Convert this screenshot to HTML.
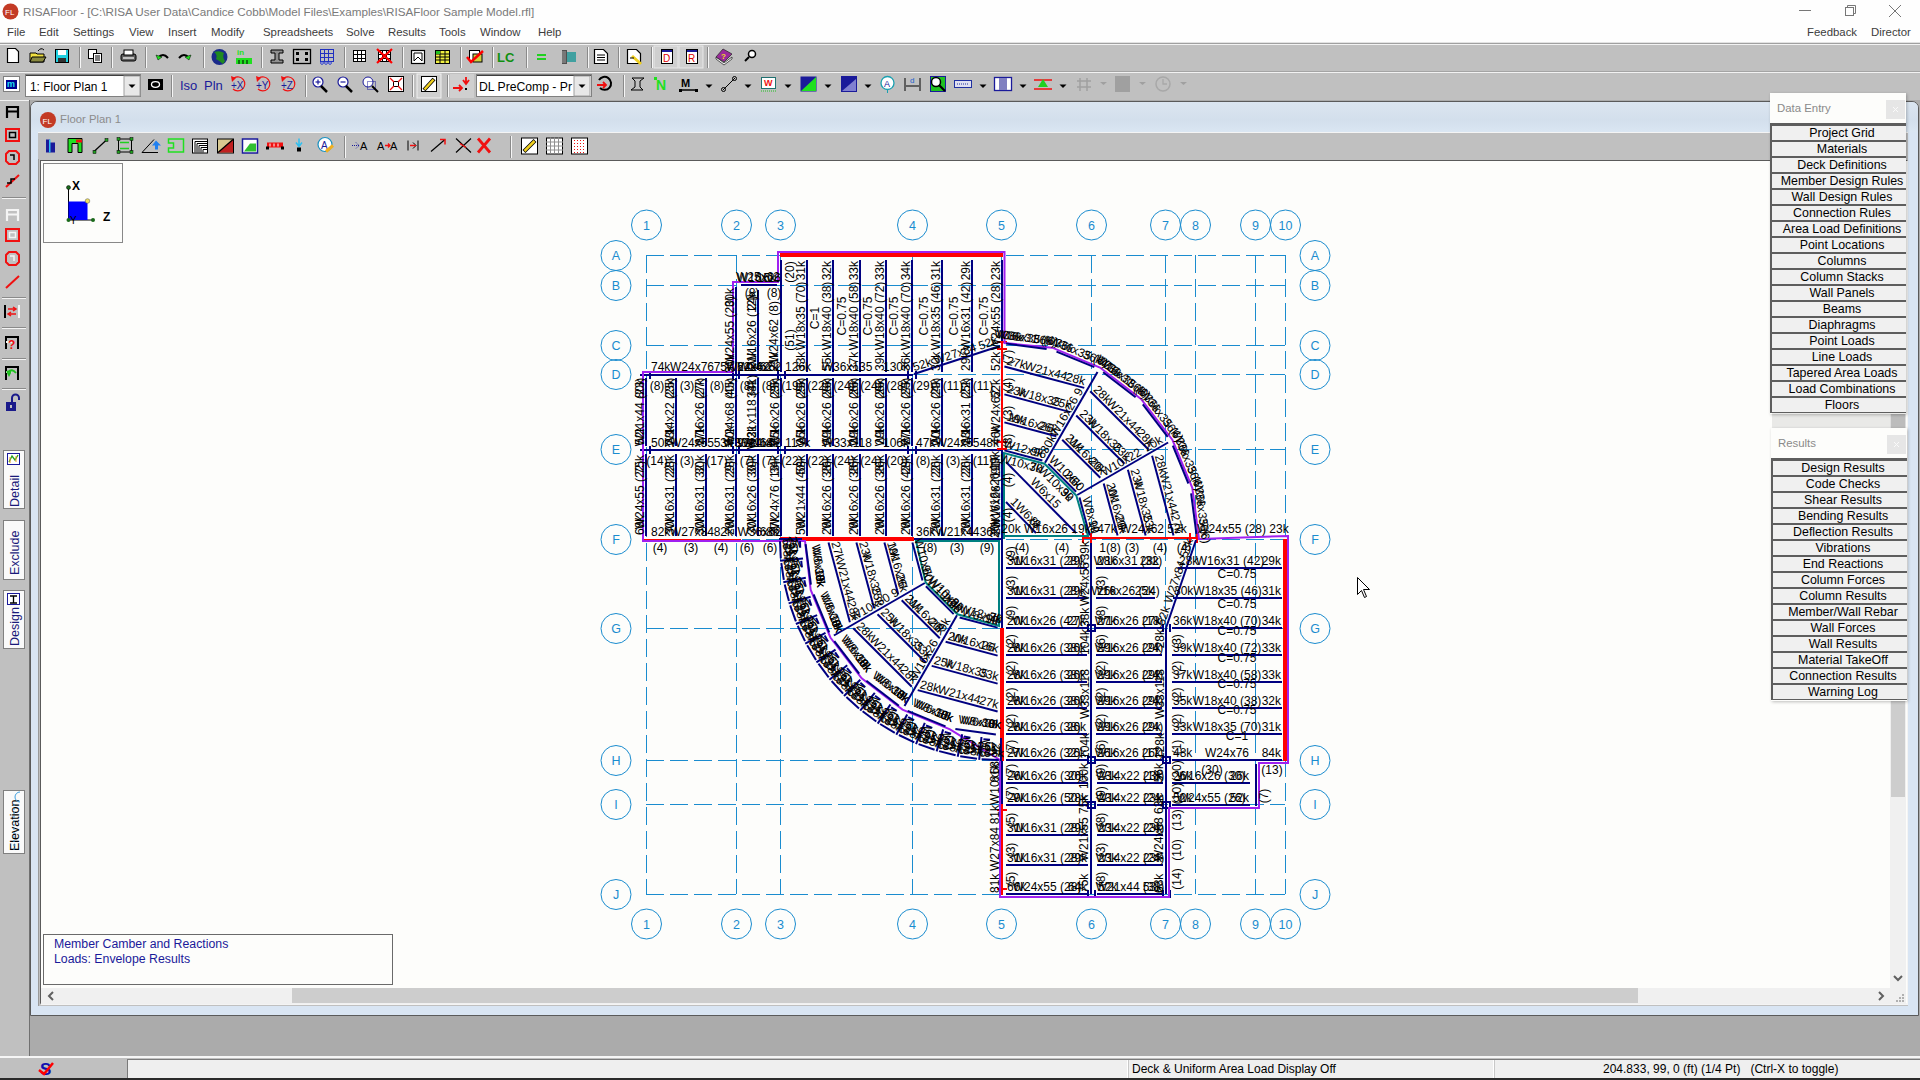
<!DOCTYPE html>
<html><head><meta charset="utf-8"><title>RISAFloor</title>
<style>
*{box-sizing:border-box}
html,body{margin:0;padding:0;width:1920px;height:1080px;overflow:hidden;background:#ababab;font-family:"Liberation Sans",sans-serif}
.a{position:absolute}
.t{position:absolute;white-space:nowrap;line-height:1}
#title{left:0;top:0;width:1920px;height:42px;background:#fefefe}
.menu{font-size:11.4px;color:#3c3c3c;top:27px}
.tb{left:0;width:1920px;background:#c0c0c0}
.sep{position:absolute;width:2px;border-left:1px solid #9a9a9a;border-right:1px solid #f4f4f4}
.pbtn{position:absolute;left:2px;width:134px;height:16px;background:#f0f0f0;border-top:2px solid #5e5e5e;border-left:1px solid #5e5e5e;font-size:12.4px;color:#000;text-align:center;line-height:14px;white-space:nowrap;overflow:hidden;padding-left:6px}
.ico{position:absolute}
</style></head>
<body>
<div id="title" class="a"></div>
<svg class="ico" style="left:2px;top:3px" width="17" height="17" viewBox="0 0 17 17"><circle cx="8.5" cy="8.5" r="8" fill="#c33a25"/><text x="3" y="12" font-size="8" fill="#fff" font-family="Liberation Sans">FL</text></svg>
<div class="t" style="left:23px;top:6px;font-size:11.7px;color:#7a7a7a">RISAFloor - [C:\RISA User Data\Candice Cobb\Model Files\Examples\RISAFloor Sample Model.rfl]</div>
<svg class="ico" style="left:1795px;top:0px" width="20" height="20" viewBox="0 0 20 20"><line x1="4" y1="10.5" x2="16" y2="10.5" stroke="#777" stroke-width="1"/></svg>
<svg class="ico" style="left:1840px;top:0px" width="20" height="20" viewBox="0 0 20 20"><rect x="5.5" y="7.5" width="8" height="8" fill="none" stroke="#777"/><path d="M7.5 7.5V5.5H15.5V13.5H13.5" fill="none" stroke="#777"/></svg>
<svg class="ico" style="left:1885px;top:1px" width="20" height="20" viewBox="0 0 20 20"><path d="M4 4L16 16M16 4L4 16" stroke="#777" stroke-width="1"/></svg>
<div class="t menu" style="left:7px">File</div>
<div class="t menu" style="left:39px">Edit</div>
<div class="t menu" style="left:73px">Settings</div>
<div class="t menu" style="left:129px">View</div>
<div class="t menu" style="left:168px">Insert</div>
<div class="t menu" style="left:211px">Modify</div>
<div class="t menu" style="left:263px">Spreadsheets</div>
<div class="t menu" style="left:346px">Solve</div>
<div class="t menu" style="left:388px">Results</div>
<div class="t menu" style="left:439px">Tools</div>
<div class="t menu" style="left:480px">Window</div>
<div class="t menu" style="left:538px">Help</div>
<div class="t menu" style="left:1807px">Feedback</div>
<div class="t menu" style="left:1871px">Director</div>
<div class="a tb" style="top:42px;height:1px;background:#e2e2e2"></div>
<div class="a tb" style="top:43px;height:1px;background:#a0a0a0"></div>
<div class="a tb" style="top:44px;height:1px;background:#f2f2f2"></div>
<div class="a tb" style="top:45px;height:26px"></div>
<div class="a tb" style="top:71px;height:1px;background:#a4a4a4"></div>
<div class="a tb" style="top:72px;height:1px;background:#f2f2f2"></div>
<div class="a tb" style="top:73px;height:27px"></div>
<div class="a" style="left:0;top:100px;width:29px;height:956px;background:#c0c0c0"></div>
<div class="a" style="left:0;top:100px;width:29px;height:1px;background:#f2f2f2"></div>
<div class="a" style="left:29px;top:100px;width:1px;height:956px;background:#707070"></div>
<div class="a" style="left:0;top:1056px;width:1920px;height:2px;background:#f6f6f6"></div>
<div class="a" style="left:0;top:1058px;width:1920px;height:22px;background:#c0c0c0"></div>
<div class="a" style="left:127px;top:1059px;width:1793px;height:19px;background:#efefef;border-top:1px solid #7a7a7a;border-left:1px solid #7a7a7a"></div>
<div class="a" style="left:1127px;top:1060px;width:2px;height:18px;background:#c8c8c8;border-left:1px solid #fff"></div>
<div class="a" style="left:1493px;top:1060px;width:2px;height:18px;background:#c8c8c8;border-left:1px solid #fff"></div>
<div class="a" style="left:0;top:1078px;width:1920px;height:2px;background:#2a2a2a"></div>
<div class="t" style="left:1132px;top:1063px;font-size:12px;color:#000">Deck &amp; Uniform Area Load Display Off</div>
<div class="t" style="left:1603px;top:1063px;font-size:12px;color:#000">204.833, 99, 0 (ft) (1/4 Pt)&nbsp;&nbsp; (Ctrl-X to toggle)</div>
<svg class="ico" style="left:38px;top:1060px" width="18" height="18" viewBox="0 0 18 18"><text x="2" y="15" font-size="17" font-weight="bold" fill="#1010b0" font-family="Liberation Sans">S</text><path d="M1 10L6 14L15 3" stroke="#f00" stroke-width="2.5" fill="none"/></svg>
<div class="a" style="left:30px;top:101px;width:1889px;height:915px;background:#d9e5f3;border:1px solid #5a5a5a;border-radius:7px 7px 0 0"></div>
<div class="a" style="left:31px;top:102px;width:1887px;height:30px;border-radius:6px 6px 0 0;background:linear-gradient(#dbe5f0,#d3dfec 60%,#dae6f2)"></div>
<svg class="ico" style="left:39px;top:111px" width="18" height="18" viewBox="0 0 18 18"><circle cx="9" cy="9" r="8" fill="#c33a25"/><text x="3.5" y="12.5" font-size="8" fill="#fff" font-family="Liberation Sans">FL</text></svg>
<div class="t" style="left:60px;top:114px;font-size:11.3px;color:#8c8c8c">Floor Plan 1</div>
<div class="a" style="left:38px;top:132px;width:1870px;height:1px;background:#f4f4f4"></div>
<div class="a" style="left:38px;top:133px;width:1870px;height:28px;background:#c0c0c0"></div>
<div class="a" style="left:38px;top:159px;width:1870px;height:847px;background:#c0c0c0;border-left:1px solid #9a9a9a"></div>
<div class="a" style="left:40px;top:160px;width:1868px;height:845px;background:#fdfdfb;border-left:1px solid #5a5a5a;border-top:1px solid #5a5a5a;border-right:1px solid #f4f4f4;border-bottom:2px solid #f4f4f4"></div>
<div class="a" style="left:41px;top:988px;width:1849px;height:16px;background:#f0f0f0"></div>
<div class="a" style="left:292px;top:988px;width:1346px;height:15px;background:#cdcdcd"></div>
<div class="a" style="left:1890px;top:161px;width:16px;height:843px;background:#f0f0f0"></div>
<div class="a" style="left:1891px;top:179px;width:14px;height:618px;background:#cdcdcd"></div>
<svg class="ico" style="left:46px;top:990px" width="10" height="12" viewBox="0 0 10 12"><path d="M7 2L3 6L7 10" stroke="#606060" stroke-width="2" fill="none"/></svg>
<svg class="ico" style="left:1876px;top:990px" width="10" height="12" viewBox="0 0 10 12"><path d="M3 2L7 6L3 10" stroke="#606060" stroke-width="2" fill="none"/></svg>
<svg class="ico" style="left:1892px;top:973px" width="12" height="10" viewBox="0 0 12 10"><path d="M2 3L6 7L10 3" stroke="#606060" stroke-width="2" fill="none"/></svg>
<svg class="ico" style="left:1893px;top:991px" width="12" height="12" viewBox="0 0 12 12"><g fill="#b0b0b0"><rect x="9" y="3" width="2" height="2"/><rect x="6" y="6" width="2" height="2"/><rect x="9" y="6" width="2" height="2"/><rect x="3" y="9" width="2" height="2"/><rect x="6" y="9" width="2" height="2"/><rect x="9" y="9" width="2" height="2"/></g></svg>
<div class="a" style="left:43px;top:163px;width:80px;height:80px;background:#fdfdfb;border:1px solid #888"></div>
<svg class="ico" style="left:60px;top:179px" width="40" height="50" viewBox="0 0 40 50"><line x1="8.5" y1="8.5" x2="8.5" y2="41" stroke="#000"/><line x1="8.5" y1="41" x2="33" y2="41" stroke="#000"/><rect x="8.5" y="22.5" width="19" height="18.5" fill="#0000ff"/><circle cx="8.5" cy="8.5" r="2" fill="#1a6a1a" stroke="#000" stroke-width=".5"/><circle cx="8.5" cy="41" r="2" fill="#1a6a1a"/><circle cx="33" cy="41" r="2" fill="#1a6a1a"/><circle cx="27.5" cy="22" r="2.3" fill="#f0e060" stroke="#555" stroke-width=".5"/><text x="12" y="11" font-size="12" font-weight="bold" fill="#000" font-family="Liberation Sans">X</text><text x="10" y="45" font-size="10" fill="#000" font-family="Liberation Sans">Y</text></svg>
<div class="t" style="left:103px;top:211px;font-size:12px;font-weight:bold;color:#000">Z</div>
<div class="a" style="left:43px;top:934px;width:350px;height:51px;background:#fdfdfb;border:1px solid #6a6a6a"></div>
<div class="t" style="left:54px;top:938px;font-size:12.3px;color:#1a1a9a">Member Camber and Reactions</div>
<div class="t" style="left:54px;top:953px;font-size:12.3px;color:#1a1a9a">Loads: Envelope Results</div>
<svg class="a" style="left:0;top:0" width="1920" height="1080" viewBox="0 0 1920 1080"><g stroke="#1a8ccf" stroke-width="1" stroke-dasharray="18 6" shape-rendering="crispEdges"><line x1="646" y1="255.5" x2="1285" y2="255.5"/><line x1="646" y1="285.5" x2="1285" y2="285.5"/><line x1="646" y1="345.5" x2="1285" y2="345.5"/><line x1="646" y1="374.5" x2="1285" y2="374.5"/><line x1="646" y1="449.5" x2="1285" y2="449.5"/><line x1="646" y1="539.5" x2="1285" y2="539.5"/><line x1="646" y1="628.5" x2="1285" y2="628.5"/><line x1="646" y1="760.5" x2="1285" y2="760.5"/><line x1="646" y1="804.5" x2="1285" y2="804.5"/><line x1="646" y1="894.5" x2="1285" y2="894.5"/><line x1="646.5" y1="255" x2="646.5" y2="894"/><line x1="736.5" y1="255" x2="736.5" y2="894"/><line x1="780.5" y1="255" x2="780.5" y2="894"/><line x1="912.5" y1="255" x2="912.5" y2="894"/><line x1="1001.5" y1="255" x2="1001.5" y2="894"/><line x1="1091.5" y1="255" x2="1091.5" y2="894"/><line x1="1165.5" y1="255" x2="1165.5" y2="894"/><line x1="1195.5" y1="255" x2="1195.5" y2="894"/><line x1="1255.5" y1="255" x2="1255.5" y2="894"/><line x1="1285.5" y1="255" x2="1285.5" y2="894"/></g>
<g fill="none" stroke="#1a8ccf" stroke-width="1"><circle cx="646.5" cy="225" r="15"/><circle cx="646.5" cy="924" r="15"/><circle cx="736.5" cy="225" r="15"/><circle cx="736.5" cy="924" r="15"/><circle cx="780.5" cy="225" r="15"/><circle cx="780.5" cy="924" r="15"/><circle cx="912.5" cy="225" r="15"/><circle cx="912.5" cy="924" r="15"/><circle cx="1001.5" cy="225" r="15"/><circle cx="1001.5" cy="924" r="15"/><circle cx="1091.5" cy="225" r="15"/><circle cx="1091.5" cy="924" r="15"/><circle cx="1165.5" cy="225" r="15"/><circle cx="1165.5" cy="924" r="15"/><circle cx="1195.5" cy="225" r="15"/><circle cx="1195.5" cy="924" r="15"/><circle cx="1255.5" cy="225" r="15"/><circle cx="1255.5" cy="924" r="15"/><circle cx="1285.5" cy="225" r="15"/><circle cx="1285.5" cy="924" r="15"/><circle cx="616" cy="255.5" r="15"/><circle cx="1315" cy="255.5" r="15"/><circle cx="616" cy="285.5" r="15"/><circle cx="1315" cy="285.5" r="15"/><circle cx="616" cy="345.5" r="15"/><circle cx="1315" cy="345.5" r="15"/><circle cx="616" cy="374.5" r="15"/><circle cx="1315" cy="374.5" r="15"/><circle cx="616" cy="449.5" r="15"/><circle cx="1315" cy="449.5" r="15"/><circle cx="616" cy="539.5" r="15"/><circle cx="1315" cy="539.5" r="15"/><circle cx="616" cy="628.5" r="15"/><circle cx="1315" cy="628.5" r="15"/><circle cx="616" cy="760.5" r="15"/><circle cx="1315" cy="760.5" r="15"/><circle cx="616" cy="804.5" r="15"/><circle cx="1315" cy="804.5" r="15"/><circle cx="616" cy="894.5" r="15"/><circle cx="1315" cy="894.5" r="15"/></g>
<g fill="#1a8ccf" font-size="12.5" text-anchor="middle" font-family="Liberation Sans"><text x="646.5" y="229.5">1</text><text x="646.5" y="928.5">1</text><text x="736.5" y="229.5">2</text><text x="736.5" y="928.5">2</text><text x="780.5" y="229.5">3</text><text x="780.5" y="928.5">3</text><text x="912.5" y="229.5">4</text><text x="912.5" y="928.5">4</text><text x="1001.5" y="229.5">5</text><text x="1001.5" y="928.5">5</text><text x="1091.5" y="229.5">6</text><text x="1091.5" y="928.5">6</text><text x="1165.5" y="229.5">7</text><text x="1165.5" y="928.5">7</text><text x="1195.5" y="229.5">8</text><text x="1195.5" y="928.5">8</text><text x="1255.5" y="229.5">9</text><text x="1255.5" y="928.5">9</text><text x="1285.5" y="229.5">10</text><text x="1285.5" y="928.5">10</text><text x="616" y="260">A</text><text x="1315" y="260">A</text><text x="616" y="290">B</text><text x="1315" y="290">B</text><text x="616" y="350">C</text><text x="1315" y="350">C</text><text x="616" y="379">D</text><text x="1315" y="379">D</text><text x="616" y="454">E</text><text x="1315" y="454">E</text><text x="616" y="544">F</text><text x="1315" y="544">F</text><text x="616" y="633">G</text><text x="1315" y="633">G</text><text x="616" y="765">H</text><text x="1315" y="765">H</text><text x="616" y="809">I</text><text x="1315" y="809">I</text><text x="616" y="899">J</text><text x="1315" y="899">J</text></g>
<g stroke="#000080" stroke-width="2" shape-rendering="crispEdges"><line x1="781" y1="260" x2="781" y2="372"/><line x1="807" y1="260" x2="807" y2="372"/><line x1="833" y1="260" x2="833" y2="372"/><line x1="860" y1="260" x2="860" y2="372"/><line x1="886" y1="260" x2="886" y2="372"/><line x1="912" y1="260" x2="912" y2="372"/><line x1="942" y1="260" x2="942" y2="372"/><line x1="972" y1="260" x2="972" y2="372"/><line x1="1002" y1="260" x2="1002" y2="372"/><line x1="736" y1="287" x2="736" y2="374"/><line x1="758" y1="290" x2="758" y2="370"/><line x1="781" y1="260" x2="781" y2="372"/><line x1="741" y1="285" x2="777" y2="285"/><line x1="640" y1="374.5" x2="913" y2="374.5"/><line x1="640" y1="450" x2="1002" y2="450"/><line x1="912" y1="539" x2="1002" y2="539"/><line x1="646" y1="378" x2="646" y2="446"/><line x1="646" y1="454" x2="646" y2="536"/><line x1="676" y1="378" x2="676" y2="446"/><line x1="676" y1="454" x2="676" y2="536"/><line x1="706" y1="378" x2="706" y2="446"/><line x1="706" y1="454" x2="706" y2="536"/><line x1="736" y1="378" x2="736" y2="446"/><line x1="736" y1="454" x2="736" y2="536"/><line x1="758" y1="378" x2="758" y2="446"/><line x1="758" y1="454" x2="758" y2="536"/><line x1="781" y1="378" x2="781" y2="446"/><line x1="781" y1="454" x2="781" y2="536"/><line x1="807" y1="378" x2="807" y2="446"/><line x1="807" y1="454" x2="807" y2="536"/><line x1="833" y1="378" x2="833" y2="446"/><line x1="833" y1="454" x2="833" y2="536"/><line x1="860" y1="378" x2="860" y2="446"/><line x1="860" y1="454" x2="860" y2="536"/><line x1="886" y1="378" x2="886" y2="446"/><line x1="886" y1="454" x2="886" y2="536"/><line x1="912" y1="378" x2="912" y2="446"/><line x1="912" y1="454" x2="912" y2="536"/><line x1="942" y1="378" x2="942" y2="446"/><line x1="942" y1="454" x2="942" y2="536"/><line x1="972" y1="378" x2="972" y2="446"/><line x1="972" y1="454" x2="972" y2="536"/><line x1="1002" y1="378" x2="1002" y2="446"/><line x1="1002" y1="454" x2="1002" y2="536"/><line x1="1002" y1="378" x2="1002" y2="628"/><line x1="1006" y1="568" x2="1087" y2="568"/><line x1="1096" y1="568" x2="1160" y2="568"/><line x1="1178" y1="568" x2="1282" y2="568"/><line x1="1006" y1="598" x2="1087" y2="598"/><line x1="1096" y1="598" x2="1155" y2="598"/><line x1="1173" y1="598" x2="1282" y2="598"/><line x1="1006" y1="628" x2="1087" y2="628"/><line x1="1096" y1="628" x2="1162" y2="628"/><line x1="1172" y1="628" x2="1282" y2="628"/><line x1="1006" y1="655" x2="1087" y2="655"/><line x1="1096" y1="655" x2="1162" y2="655"/><line x1="1172" y1="655" x2="1282" y2="655"/><line x1="1006" y1="681.5" x2="1087" y2="681.5"/><line x1="1096" y1="681.5" x2="1162" y2="681.5"/><line x1="1172" y1="681.5" x2="1282" y2="681.5"/><line x1="1006" y1="708" x2="1087" y2="708"/><line x1="1096" y1="708" x2="1162" y2="708"/><line x1="1172" y1="708" x2="1282" y2="708"/><line x1="1006" y1="734" x2="1087" y2="734"/><line x1="1096" y1="734" x2="1162" y2="734"/><line x1="1172" y1="734" x2="1282" y2="734"/><line x1="1006" y1="760" x2="1087" y2="760"/><line x1="1096" y1="760" x2="1162" y2="760"/><line x1="1172" y1="760" x2="1282" y2="760"/><line x1="1091" y1="540" x2="1091" y2="894"/><line x1="1166" y1="628" x2="1166" y2="894"/><line x1="1006" y1="782.5" x2="1088" y2="782.5"/><line x1="1097" y1="782.5" x2="1163" y2="782.5"/><line x1="1006" y1="804.5" x2="1088" y2="804.5"/><line x1="1097" y1="804.5" x2="1163" y2="804.5"/><line x1="1006" y1="835" x2="1088" y2="835"/><line x1="1097" y1="835" x2="1163" y2="835"/><line x1="1006" y1="865" x2="1088" y2="865"/><line x1="1097" y1="865" x2="1163" y2="865"/><line x1="1006" y1="893.5" x2="1088" y2="893.5"/><line x1="1097" y1="893.5" x2="1163" y2="893.5"/><line x1="1172" y1="782.5" x2="1250" y2="782.5"/><line x1="1172" y1="804.5" x2="1250" y2="804.5"/><line x1="1256" y1="764" x2="1256" y2="806"/><line x1="1002" y1="760" x2="1002" y2="804"/><line x1="650" y1="370.5" x2="650" y2="378.5"/><line x1="733" y1="370.5" x2="733" y2="378.5"/><line x1="739" y1="370.5" x2="739" y2="378.5"/><line x1="778" y1="370.5" x2="778" y2="378.5"/><line x1="785" y1="370.5" x2="785" y2="378.5"/><line x1="908" y1="370.5" x2="908" y2="378.5"/><line x1="916" y1="370.5" x2="916" y2="378.5"/><line x1="650" y1="446" x2="650" y2="454"/><line x1="733" y1="446" x2="733" y2="454"/><line x1="739" y1="446" x2="739" y2="454"/><line x1="778" y1="446" x2="778" y2="454"/><line x1="785" y1="446" x2="785" y2="454"/><line x1="908" y1="446" x2="908" y2="454"/><line x1="916" y1="446" x2="916" y2="454"/><line x1="1088" y1="624" x2="1088" y2="632"/><line x1="1095" y1="624" x2="1095" y2="632"/><line x1="1163" y1="624" x2="1163" y2="632"/><line x1="1170" y1="624" x2="1170" y2="632"/><line x1="1088" y1="756" x2="1088" y2="764"/><line x1="1095" y1="756" x2="1095" y2="764"/><line x1="1163" y1="756" x2="1163" y2="764"/><line x1="1170" y1="756" x2="1170" y2="764"/><line x1="1088" y1="800.5" x2="1088" y2="808.5"/><line x1="1095" y1="800.5" x2="1095" y2="808.5"/><line x1="1163" y1="800.5" x2="1163" y2="808.5"/><line x1="1170" y1="800.5" x2="1170" y2="808.5"/><line x1="1088" y1="889.5" x2="1088" y2="897.5"/><line x1="1095" y1="889.5" x2="1095" y2="897.5"/><line x1="1163" y1="889.5" x2="1163" y2="897.5"/><line x1="1170" y1="889.5" x2="1170" y2="897.5"/><line x1="1087" y1="625" x2="1095" y2="625"/><line x1="1087" y1="631" x2="1095" y2="631"/><line x1="1087" y1="757" x2="1095" y2="757"/><line x1="1087" y1="763" x2="1095" y2="763"/><line x1="1162" y1="757" x2="1170" y2="757"/><line x1="1162" y1="763" x2="1170" y2="763"/><line x1="1162" y1="801.5" x2="1170" y2="801.5"/><line x1="1162" y1="807.5" x2="1170" y2="807.5"/><line x1="1087" y1="801.5" x2="1095" y2="801.5"/><line x1="1087" y1="807.5" x2="1095" y2="807.5"/></g>
<g stroke="#ff0000" stroke-width="4" shape-rendering="crispEdges"><line x1="780" y1="255" x2="1003" y2="255"/><line x1="780" y1="539" x2="914" y2="539"/><line x1="1002" y1="628" x2="1002" y2="761"/><line x1="1285" y1="539" x2="1285" y2="761"/></g>
<g stroke="#ff0000" stroke-width="2" shape-rendering="crispEdges"><line x1="1002" y1="343" x2="1002" y2="449"/><line x1="643" y1="540" x2="741" y2="540"/><line x1="1084" y1="538" x2="1197" y2="538"/><line x1="1002" y1="804" x2="1002" y2="895"/><line x1="997" y1="342" x2="1007" y2="342"/><line x1="997" y1="349" x2="1007" y2="349"/><line x1="997" y1="442" x2="1007" y2="442"/><line x1="997" y1="449" x2="1007" y2="449"/><line x1="1083" y1="533" x2="1083" y2="543"/><line x1="1091" y1="533" x2="1091" y2="543"/><line x1="1190" y1="533" x2="1190" y2="543"/><line x1="1197" y1="533" x2="1197" y2="543"/><line x1="997" y1="810" x2="1007" y2="810"/><line x1="997" y1="889" x2="1007" y2="889"/></g>
<line x1="914.0" y1="374.0" x2="1000.0" y2="346.0" stroke="#000080" stroke-width="2"/>
<line x1="1196.0" y1="540.0" x2="1166.0" y2="628.0" stroke="#000080" stroke-width="2"/>
<polygon points="643.0,541.0 643.0,372.0 733.0,372.0 733.0,282.0 778.0,282.0 778.0,252.0 1004.5,252.0 1004.5,343.0 1052.2,347.7 1100.0,367.5 1141.0,399.0 1172.5,440.0 1192.3,487.8 1199.0,539.0 1288.0,536.0 1288.0,763.0 1259.0,763.0 1259.0,808.0 1169.0,808.0 1169.0,897.0 1000.0,897.0 1000.0,760.0 950.0,729.3 902.5,709.6 861.7,678.3 830.4,637.5 810.7,590.0 805.0,541.0 643.0,541.0" fill="none" stroke="#a020f0" stroke-width="2"/>
<line x1="1173.5" y1="535.6" x2="1152.1" y2="455.7" stroke="#000080" stroke-width="2"/>
<line x1="1145.6" y1="535.6" x2="1127.9" y2="469.7" stroke="#000080" stroke-width="2"/>
<line x1="1117.6" y1="535.6" x2="1103.7" y2="483.6" stroke="#000080" stroke-width="2"/>
<line x1="1089.6" y1="535.6" x2="1079.5" y2="497.6" stroke="#000080" stroke-width="2"/>
<line x1="1196.4" y1="533.9" x2="1191.1" y2="493.4" stroke="#000080" stroke-width="2"/>
<line x1="1188.4" y1="483.5" x2="1172.8" y2="445.7" stroke="#000080" stroke-width="2"/>
<line x1="1148.7" y1="449.8" x2="1090.2" y2="391.3" stroke="#000080" stroke-width="2"/>
<line x1="1124.5" y1="463.8" x2="1076.2" y2="415.5" stroke="#000080" stroke-width="2"/>
<line x1="1100.3" y1="477.8" x2="1062.2" y2="439.7" stroke="#000080" stroke-width="2"/>
<line x1="1076.1" y1="491.7" x2="1048.3" y2="463.9" stroke="#000080" stroke-width="2"/>
<line x1="1167.7" y1="436.9" x2="1142.8" y2="404.4" stroke="#000080" stroke-width="2"/>
<line x1="1135.6" y1="397.2" x2="1103.1" y2="372.3" stroke="#000080" stroke-width="2"/>
<line x1="1084.3" y1="387.9" x2="1004.4" y2="366.5" stroke="#000080" stroke-width="2"/>
<line x1="1070.3" y1="412.1" x2="1004.4" y2="394.4" stroke="#000080" stroke-width="2"/>
<line x1="1056.4" y1="436.3" x2="1004.4" y2="422.4" stroke="#000080" stroke-width="2"/>
<line x1="1042.4" y1="460.5" x2="1004.4" y2="450.4" stroke="#000080" stroke-width="2"/>
<line x1="1094.3" y1="367.2" x2="1056.5" y2="351.6" stroke="#000080" stroke-width="2"/>
<line x1="1046.6" y1="348.9" x2="1006.1" y2="343.6" stroke="#000080" stroke-width="2"/>
<line x1="828.5" y1="542.4" x2="849.9" y2="622.3" stroke="#000080" stroke-width="2"/>
<line x1="856.4" y1="542.4" x2="874.1" y2="608.3" stroke="#000080" stroke-width="2"/>
<line x1="884.4" y1="542.4" x2="898.3" y2="594.4" stroke="#000080" stroke-width="2"/>
<line x1="912.4" y1="542.4" x2="922.5" y2="580.4" stroke="#000080" stroke-width="2"/>
<line x1="805.6" y1="544.1" x2="810.9" y2="584.6" stroke="#000080" stroke-width="2"/>
<line x1="813.6" y1="594.5" x2="829.2" y2="632.3" stroke="#000080" stroke-width="2"/>
<line x1="853.3" y1="628.2" x2="911.8" y2="686.7" stroke="#000080" stroke-width="2"/>
<line x1="877.5" y1="614.2" x2="925.8" y2="662.5" stroke="#000080" stroke-width="2"/>
<line x1="901.7" y1="600.2" x2="939.8" y2="638.3" stroke="#000080" stroke-width="2"/>
<line x1="925.9" y1="586.3" x2="953.7" y2="614.1" stroke="#000080" stroke-width="2"/>
<line x1="834.3" y1="641.1" x2="859.2" y2="673.6" stroke="#000080" stroke-width="2"/>
<line x1="866.4" y1="680.8" x2="898.9" y2="705.7" stroke="#000080" stroke-width="2"/>
<line x1="917.7" y1="690.1" x2="997.6" y2="711.5" stroke="#000080" stroke-width="2"/>
<line x1="931.7" y1="665.9" x2="997.6" y2="683.6" stroke="#000080" stroke-width="2"/>
<line x1="945.6" y1="641.7" x2="997.6" y2="655.6" stroke="#000080" stroke-width="2"/>
<line x1="959.6" y1="617.5" x2="997.6" y2="627.6" stroke="#000080" stroke-width="2"/>
<line x1="907.7" y1="710.8" x2="945.5" y2="726.4" stroke="#000080" stroke-width="2"/>
<line x1="955.4" y1="729.1" x2="995.9" y2="734.4" stroke="#000080" stroke-width="2"/>
<line x1="1077.2" y1="495.0" x2="1168.1" y2="442.5" stroke="#000080" stroke-width="2"/>
<line x1="1045.0" y1="462.8" x2="1097.5" y2="371.9" stroke="#000080" stroke-width="2"/>
<line x1="924.8" y1="583.0" x2="833.9" y2="635.5" stroke="#000080" stroke-width="2"/>
<line x1="957.0" y1="615.2" x2="904.5" y2="706.1" stroke="#000080" stroke-width="2"/>
<polygon points="1004.0,539.0 1004.0,453.0 1044.5,463.7 1076.3,495.5 1088.0,536.0 1004.0,536.0" fill="none" stroke="#008080" stroke-width="2"/>
<polygon points="916.0,541.0 925.7,582.5 957.5,614.3 999.0,626.0 999.0,541.0" fill="none" stroke="#008080" stroke-width="2"/>
<line x1="1006.0" y1="462.0" x2="1076.0" y2="533.0" stroke="#000080" stroke-width="2"/>
<line x1="1006.0" y1="502.0" x2="1036.0" y2="533.0" stroke="#000080" stroke-width="2"/>
<line x1="802.0" y1="539.0" x2="779.0" y2="539.0" stroke="#000080" stroke-width="2"/>
<line x1="803.0" y1="558.5" x2="780.1" y2="560.8" stroke="#000080" stroke-width="2"/>
<line x1="805.8" y1="577.8" x2="783.3" y2="582.3" stroke="#000080" stroke-width="2"/>
<line x1="810.6" y1="596.8" x2="788.6" y2="603.4" stroke="#000080" stroke-width="2"/>
<line x1="817.1" y1="615.2" x2="795.9" y2="624.0" stroke="#000080" stroke-width="2"/>
<line x1="825.5" y1="632.8" x2="805.2" y2="643.7" stroke="#000080" stroke-width="2"/>
<line x1="835.5" y1="649.6" x2="816.4" y2="662.3" stroke="#000080" stroke-width="2"/>
<line x1="847.2" y1="665.2" x2="829.4" y2="679.8" stroke="#000080" stroke-width="2"/>
<line x1="860.3" y1="679.7" x2="844.0" y2="696.0" stroke="#000080" stroke-width="2"/>
<line x1="874.8" y1="692.8" x2="860.2" y2="710.6" stroke="#000080" stroke-width="2"/>
<line x1="890.4" y1="704.5" x2="877.7" y2="723.6" stroke="#000080" stroke-width="2"/>
<line x1="907.2" y1="714.5" x2="896.3" y2="734.8" stroke="#000080" stroke-width="2"/>
<line x1="924.8" y1="722.9" x2="916.0" y2="744.1" stroke="#000080" stroke-width="2"/>
<line x1="943.2" y1="729.4" x2="936.6" y2="751.4" stroke="#000080" stroke-width="2"/>
<line x1="962.2" y1="734.2" x2="957.7" y2="756.7" stroke="#000080" stroke-width="2"/>
<line x1="981.5" y1="737.0" x2="979.2" y2="759.9" stroke="#000080" stroke-width="2"/>
<line x1="1001.0" y1="738.0" x2="1001.0" y2="761.0" stroke="#000080" stroke-width="2"/>
<line x1="780.0" y1="541.3" x2="780.8" y2="558.4" stroke="#000080" stroke-width="2"/>
<line x1="800.0" y1="541.1" x2="800.2" y2="547.8" stroke="#000080" stroke-width="2"/>
<line x1="781.3" y1="563.0" x2="783.8" y2="579.8" stroke="#000080" stroke-width="2"/>
<line x1="801.2" y1="560.8" x2="802.0" y2="567.4" stroke="#000080" stroke-width="2"/>
<line x1="784.7" y1="584.4" x2="788.9" y2="600.9" stroke="#000080" stroke-width="2"/>
<line x1="804.3" y1="580.3" x2="805.8" y2="586.8" stroke="#000080" stroke-width="2"/>
<line x1="790.2" y1="605.4" x2="795.9" y2="621.4" stroke="#000080" stroke-width="2"/>
<line x1="809.3" y1="599.4" x2="811.4" y2="605.7" stroke="#000080" stroke-width="2"/>
<line x1="797.7" y1="625.7" x2="805.0" y2="641.1" stroke="#000080" stroke-width="2"/>
<line x1="816.1" y1="617.9" x2="818.8" y2="623.9" stroke="#000080" stroke-width="2"/>
<line x1="807.2" y1="645.2" x2="816.0" y2="659.9" stroke="#000080" stroke-width="2"/>
<line x1="824.7" y1="635.6" x2="828.0" y2="641.4" stroke="#000080" stroke-width="2"/>
<line x1="818.5" y1="663.7" x2="828.7" y2="677.4" stroke="#000080" stroke-width="2"/>
<line x1="835.1" y1="652.4" x2="838.9" y2="657.9" stroke="#000080" stroke-width="2"/>
<line x1="831.6" y1="681.0" x2="843.1" y2="693.6" stroke="#000080" stroke-width="2"/>
<line x1="847.0" y1="668.1" x2="851.3" y2="673.2" stroke="#000080" stroke-width="2"/>
<line x1="846.4" y1="696.9" x2="859.0" y2="708.4" stroke="#000080" stroke-width="2"/>
<line x1="860.4" y1="682.6" x2="865.2" y2="687.2" stroke="#000080" stroke-width="2"/>
<line x1="862.6" y1="711.3" x2="876.3" y2="721.5" stroke="#000080" stroke-width="2"/>
<line x1="875.1" y1="695.7" x2="880.4" y2="699.8" stroke="#000080" stroke-width="2"/>
<line x1="880.1" y1="724.0" x2="894.8" y2="732.8" stroke="#000080" stroke-width="2"/>
<line x1="891.1" y1="707.3" x2="896.7" y2="710.8" stroke="#000080" stroke-width="2"/>
<line x1="898.9" y1="735.0" x2="914.3" y2="742.3" stroke="#000080" stroke-width="2"/>
<line x1="908.1" y1="717.2" x2="914.1" y2="720.2" stroke="#000080" stroke-width="2"/>
<line x1="918.6" y1="744.1" x2="934.6" y2="749.8" stroke="#000080" stroke-width="2"/>
<line x1="926.0" y1="725.5" x2="932.3" y2="727.9" stroke="#000080" stroke-width="2"/>
<line x1="939.1" y1="751.1" x2="955.6" y2="755.3" stroke="#000080" stroke-width="2"/>
<line x1="944.7" y1="731.9" x2="951.1" y2="733.7" stroke="#000080" stroke-width="2"/>
<line x1="960.2" y1="756.2" x2="977.0" y2="758.7" stroke="#000080" stroke-width="2"/>
<line x1="963.9" y1="736.5" x2="970.4" y2="737.7" stroke="#000080" stroke-width="2"/>
<line x1="981.6" y1="759.2" x2="998.7" y2="760.0" stroke="#000080" stroke-width="2"/>
<line x1="983.4" y1="739.2" x2="990.0" y2="739.7" stroke="#000080" stroke-width="2"/><g font-family="Liberation Sans" font-size="12" fill="#000" text-anchor="middle"><text transform="translate(804.5,316.0) rotate(-90.0)">W18x35 (70)</text>
<text transform="translate(804.5,371.0) rotate(-90.0)" text-anchor="start">33k</text>
<text transform="translate(804.5,261.0) rotate(-90.0)" text-anchor="end">31k</text>
<text transform="translate(830.5,316.0) rotate(-90.0)">W18x40 (38)</text>
<text transform="translate(830.5,371.0) rotate(-90.0)" text-anchor="start">55k</text>
<text transform="translate(830.5,261.0) rotate(-90.0)" text-anchor="end">32k</text>
<text transform="translate(857.5,316.0) rotate(-90.0)">W18x40 (58)</text>
<text transform="translate(857.5,371.0) rotate(-90.0)" text-anchor="start">37k</text>
<text transform="translate(857.5,261.0) rotate(-90.0)" text-anchor="end">33k</text>
<text transform="translate(883.5,316.0) rotate(-90.0)">W18x40 (72)</text>
<text transform="translate(883.5,371.0) rotate(-90.0)" text-anchor="start">39k</text>
<text transform="translate(883.5,261.0) rotate(-90.0)" text-anchor="end">33k</text>
<text transform="translate(909.5,316.0) rotate(-90.0)">W18x40 (70)</text>
<text transform="translate(909.5,371.0) rotate(-90.0)" text-anchor="start">36k</text>
<text transform="translate(909.5,261.0) rotate(-90.0)" text-anchor="end">34k</text>
<text transform="translate(939.5,316.0) rotate(-90.0)">W18x35 (46)</text>
<text transform="translate(939.5,371.0) rotate(-90.0)" text-anchor="start">30k</text>
<text transform="translate(939.5,261.0) rotate(-90.0)" text-anchor="end">31k</text>
<text transform="translate(969.5,316.0) rotate(-90.0)">W16x31 (42)</text>
<text transform="translate(969.5,371.0) rotate(-90.0)" text-anchor="start">29k</text>
<text transform="translate(969.5,261.0) rotate(-90.0)" text-anchor="end">29k</text>
<text transform="translate(999.5,316.0) rotate(-90.0)">W24x55 (28)</text>
<text transform="translate(999.5,371.0) rotate(-90.0)" text-anchor="start">52k</text>
<text transform="translate(999.5,261.0) rotate(-90.0)" text-anchor="end">23k</text>
<text transform="translate(819.0,318.0) rotate(-90.0)">C=1</text>
<text transform="translate(846.0,316.0) rotate(-90.0)">C=0.75</text>
<text transform="translate(872.0,316.0) rotate(-90.0)">C=0.75</text>
<text transform="translate(898.0,316.0) rotate(-90.0)">C=0.75</text>
<text transform="translate(928.0,316.0) rotate(-90.0)">C=0.75</text>
<text transform="translate(958.0,316.0) rotate(-90.0)">C=0.75</text>
<text transform="translate(988.0,316.0) rotate(-90.0)">C=0.75</text>
<text transform="translate(794.0,340.0) rotate(-90.0)">(51)</text>
<text transform="translate(794.0,272.0) rotate(-90.0)">(20)</text>
<text transform="translate(733.5,330.5) rotate(-90.0)">W24x55 (20)</text>
<text transform="translate(733.5,373.0) rotate(-90.0)" text-anchor="start">30k</text>
<text transform="translate(733.5,288.0) rotate(-90.0)" text-anchor="end">30k</text>
<text transform="translate(755.5,330.0) rotate(-90.0)">W16x26 (12)</text>
<text transform="translate(755.5,369.0) rotate(-90.0)" text-anchor="start">21k</text>
<text transform="translate(755.5,291.0) rotate(-90.0)" text-anchor="end">24k</text>
<text transform="translate(778.0,332.0) rotate(-90.0)">W24x62 (8)</text>
<text transform="translate(778.0,371.0) rotate(-90.0)" text-anchor="start">21k</text>
<text x="759.0" y="282.0">W16x26</text>
<text x="776.0" y="282.0" text-anchor="end">15k</text>
<text x="758.0" y="281.0">W25x62</text>
<text x="752.0" y="297.0">(8)</text>
<text x="774.0" y="297.0">(8)</text>
<text x="692.0" y="371.0">W24x76</text>
<text x="651.0" y="371.0" text-anchor="start">74k</text>
<text x="733.0" y="371.0" text-anchor="end">75k</text>
<text x="759.5" y="371.0">W24x62</text>
<text x="779.0" y="371.0" text-anchor="end">62k</text>
<text x="748.0" y="371.0">W24x62</text>
<text x="737.0" y="371.0" text-anchor="start">62k</text>
<text x="847.0" y="371.0">W36x135</text>
<text x="785.0" y="371.0" text-anchor="start">126k</text>
<text x="909.0" y="371.0" text-anchor="end">130k</text>
<text x="692.0" y="446.5">W24x55</text>
<text x="651.0" y="446.5" text-anchor="start">50k</text>
<text x="733.0" y="446.5" text-anchor="end">53k</text>
<text x="759.5" y="446.5">W24x62</text>
<text x="779.0" y="446.5" text-anchor="end">64k</text>
<text x="748.0" y="446.5">W33x118</text>
<text x="737.0" y="446.5" text-anchor="start">93k</text>
<text x="847.0" y="446.5">W33x118</text>
<text x="785.0" y="446.5" text-anchor="start">113k</text>
<text x="909.0" y="446.5" text-anchor="end">106k</text>
<text x="957.5" y="446.5">W24x55</text>
<text x="916.0" y="446.5" text-anchor="start">47k</text>
<text x="999.0" y="446.5" text-anchor="end">48k</text>
<text x="692.0" y="535.5">W27x84</text>
<text x="651.0" y="535.5" text-anchor="start">82k</text>
<text x="733.0" y="535.5" text-anchor="end">82k</text>
<text x="759.5" y="535.5">W36x62</text>
<text x="779.0" y="535.5" text-anchor="end">68k</text>
<text x="957.5" y="535.5">W21x44</text>
<text x="916.0" y="535.5" text-anchor="start">36k</text>
<text x="999.0" y="535.5" text-anchor="end">36k</text>
<text transform="translate(643.5,412.0) rotate(-90.0)">W21x44 (23)</text>
<text transform="translate(643.5,445.0) rotate(-90.0)" text-anchor="start">52k</text>
<text transform="translate(643.5,379.0) rotate(-90.0)" text-anchor="end">80k</text>
<text transform="translate(643.5,495.0) rotate(-90.0)">W24x55 (22)</text>
<text transform="translate(643.5,535.0) rotate(-90.0)" text-anchor="start">68k</text>
<text transform="translate(643.5,455.0) rotate(-90.0)" text-anchor="end">75k</text>
<text transform="translate(673.5,412.0) rotate(-90.0)">W14x22 (25)</text>
<text transform="translate(673.5,445.0) rotate(-90.0)" text-anchor="start">23k</text>
<text transform="translate(673.5,379.0) rotate(-90.0)" text-anchor="end">23k</text>
<text transform="translate(673.5,495.0) rotate(-90.0)">W16x31 (22)</text>
<text transform="translate(673.5,535.0) rotate(-90.0)" text-anchor="start">30k</text>
<text transform="translate(673.5,455.0) rotate(-90.0)" text-anchor="end">28k</text>
<text transform="translate(703.5,412.0) rotate(-90.0)">W16x26 (27)</text>
<text transform="translate(703.5,445.0) rotate(-90.0)" text-anchor="start">27k</text>
<text transform="translate(703.5,379.0) rotate(-90.0)" text-anchor="end">27k</text>
<text transform="translate(703.5,495.0) rotate(-90.0)">W16x31 (32)</text>
<text transform="translate(703.5,535.0) rotate(-90.0)" text-anchor="start">30k</text>
<text transform="translate(703.5,455.0) rotate(-90.0)" text-anchor="end">30k</text>
<text transform="translate(733.5,412.0) rotate(-90.0)">W24x68 (45)</text>
<text transform="translate(733.5,445.0) rotate(-90.0)" text-anchor="start">40k</text>
<text transform="translate(733.5,379.0) rotate(-90.0)" text-anchor="end">40k</text>
<text transform="translate(733.5,495.0) rotate(-90.0)">W16x31 (29)</text>
<text transform="translate(733.5,535.0) rotate(-90.0)" text-anchor="start">28k</text>
<text transform="translate(733.5,455.0) rotate(-90.0)" text-anchor="end">28k</text>
<text transform="translate(755.5,412.0) rotate(-90.0)">W21x118 (31)</text>
<text transform="translate(755.5,445.0) rotate(-90.0)" text-anchor="start">53k</text>
<text transform="translate(755.5,379.0) rotate(-90.0)" text-anchor="end">34k</text>
<text transform="translate(755.5,495.0) rotate(-90.0)">W16x26 (30)</text>
<text transform="translate(755.5,535.0) rotate(-90.0)" text-anchor="start">30k</text>
<text transform="translate(755.5,455.0) rotate(-90.0)" text-anchor="end">30k</text>
<text transform="translate(778.5,412.0) rotate(-90.0)">W16x26 (25)</text>
<text transform="translate(778.5,445.0) rotate(-90.0)" text-anchor="start">25k</text>
<text transform="translate(778.5,379.0) rotate(-90.0)" text-anchor="end">23k</text>
<text transform="translate(778.5,495.0) rotate(-90.0)">W24x76 (13)</text>
<text transform="translate(778.5,535.0) rotate(-90.0)" text-anchor="start">37k</text>
<text transform="translate(778.5,455.0) rotate(-90.0)" text-anchor="end">34k</text>
<text transform="translate(804.5,412.0) rotate(-90.0)">W16x26 (25)</text>
<text transform="translate(804.5,445.0) rotate(-90.0)" text-anchor="start">25k</text>
<text transform="translate(804.5,379.0) rotate(-90.0)" text-anchor="end">25k</text>
<text transform="translate(804.5,495.0) rotate(-90.0)">W21x44 (40)</text>
<text transform="translate(804.5,535.0) rotate(-90.0)" text-anchor="start">58k</text>
<text transform="translate(804.5,455.0) rotate(-90.0)" text-anchor="end">58k</text>
<text transform="translate(830.5,412.0) rotate(-90.0)">W16x26 (26)</text>
<text transform="translate(830.5,445.0) rotate(-90.0)" text-anchor="start">29k</text>
<text transform="translate(830.5,379.0) rotate(-90.0)" text-anchor="end">26k</text>
<text transform="translate(830.5,495.0) rotate(-90.0)">W16x26 (38)</text>
<text transform="translate(830.5,535.0) rotate(-90.0)" text-anchor="start">28k</text>
<text transform="translate(830.5,455.0) rotate(-90.0)" text-anchor="end">26k</text>
<text transform="translate(857.5,412.0) rotate(-90.0)">W16x26 (26)</text>
<text transform="translate(857.5,445.0) rotate(-90.0)" text-anchor="start">29k</text>
<text transform="translate(857.5,379.0) rotate(-90.0)" text-anchor="end">26k</text>
<text transform="translate(857.5,495.0) rotate(-90.0)">W16x26 (38)</text>
<text transform="translate(857.5,535.0) rotate(-90.0)" text-anchor="start">28k</text>
<text transform="translate(857.5,455.0) rotate(-90.0)" text-anchor="end">26k</text>
<text transform="translate(883.5,412.0) rotate(-90.0)">W16x26 (26)</text>
<text transform="translate(883.5,445.0) rotate(-90.0)" text-anchor="start">29k</text>
<text transform="translate(883.5,379.0) rotate(-90.0)" text-anchor="end">26k</text>
<text transform="translate(883.5,495.0) rotate(-90.0)">W16x26 (38)</text>
<text transform="translate(883.5,535.0) rotate(-90.0)" text-anchor="start">28k</text>
<text transform="translate(883.5,455.0) rotate(-90.0)" text-anchor="end">26k</text>
<text transform="translate(909.5,412.0) rotate(-90.0)">W16x26 (25)</text>
<text transform="translate(909.5,445.0) rotate(-90.0)" text-anchor="start">27k</text>
<text transform="translate(909.5,379.0) rotate(-90.0)" text-anchor="end">27k</text>
<text transform="translate(909.5,495.0) rotate(-90.0)">W16x26 (42)</text>
<text transform="translate(909.5,535.0) rotate(-90.0)" text-anchor="start">28k</text>
<text transform="translate(909.5,455.0) rotate(-90.0)" text-anchor="end">28k</text>
<text transform="translate(939.5,412.0) rotate(-90.0)">W16x26 (29)</text>
<text transform="translate(939.5,445.0) rotate(-90.0)" text-anchor="start">20k</text>
<text transform="translate(939.5,379.0) rotate(-90.0)" text-anchor="end">24k</text>
<text transform="translate(939.5,495.0) rotate(-90.0)">W16x31 (22)</text>
<text transform="translate(939.5,535.0) rotate(-90.0)" text-anchor="start">28k</text>
<text transform="translate(939.5,455.0) rotate(-90.0)" text-anchor="end">26k</text>
<text transform="translate(969.5,412.0) rotate(-90.0)">W16x31 (22)</text>
<text transform="translate(969.5,445.0) rotate(-90.0)" text-anchor="start">23k</text>
<text transform="translate(969.5,379.0) rotate(-90.0)" text-anchor="end">25k</text>
<text transform="translate(969.5,495.0) rotate(-90.0)">W16x31 (22)</text>
<text transform="translate(969.5,535.0) rotate(-90.0)" text-anchor="start">28k</text>
<text transform="translate(969.5,455.0) rotate(-90.0)" text-anchor="end">26k</text>
<text transform="translate(999.5,412.0) rotate(-90.0)">W24x62</text>
<text transform="translate(999.5,445.0) rotate(-90.0)" text-anchor="start">46k</text>
<text transform="translate(999.5,379.0) rotate(-90.0)" text-anchor="end">52k</text>
<text transform="translate(999.5,495.0) rotate(-90.0)">W16x26 (19)</text>
<text transform="translate(999.5,535.0) rotate(-90.0)" text-anchor="start">20k</text>
<text transform="translate(999.5,455.0) rotate(-90.0)" text-anchor="end">91k</text>
<text x="657.0" y="390.0">(8)</text>
<text x="657.0" y="465.0">(14)</text>
<text x="687.0" y="390.0">(3)</text>
<text x="687.0" y="465.0">(3)</text>
<text x="717.0" y="390.0">(8)</text>
<text x="717.0" y="465.0">(17)</text>
<text x="747.0" y="390.0">(8)</text>
<text x="747.0" y="465.0">(7)</text>
<text x="769.0" y="390.0">(8)</text>
<text x="769.0" y="465.0">(7)</text>
<text x="792.0" y="390.0">(19)</text>
<text x="792.0" y="465.0">(22)</text>
<text x="818.0" y="390.0">(22)</text>
<text x="818.0" y="465.0">(22)</text>
<text x="844.0" y="390.0">(24)</text>
<text x="844.0" y="465.0">(24)</text>
<text x="871.0" y="390.0">(24)</text>
<text x="871.0" y="465.0">(24)</text>
<text x="897.0" y="390.0">(28)</text>
<text x="897.0" y="465.0">(20)</text>
<text x="923.0" y="390.0">(29)</text>
<text x="923.0" y="465.0">(8)</text>
<text x="953.0" y="390.0">(11)</text>
<text x="953.0" y="465.0">(3)</text>
<text x="983.0" y="390.0">(11)</text>
<text x="983.0" y="465.0">(11)</text>
<text x="660.0" y="552.0">(4)</text>
<text x="691.0" y="552.0">(3)</text>
<text x="721.0" y="552.0">(4)</text>
<text x="747.0" y="552.0">(6)</text>
<text x="770.0" y="552.0">(6)</text>
<text x="930.0" y="552.0">(8)</text>
<text x="957.0" y="552.0">(3)</text>
<text x="987.0" y="552.0">(9)</text>
<text x="1046.5" y="565.0">W16x31 (28)</text>
<text x="1007.0" y="565.0" text-anchor="start">31k</text>
<text x="1086.0" y="565.0" text-anchor="end">29k</text>
<text x="1128.0" y="565.0">W16x31 (32)</text>
<text x="1097.0" y="565.0" text-anchor="start">28k</text>
<text x="1159.0" y="565.0" text-anchor="end">28k</text>
<text x="1230.0" y="565.0">W16x31 (42)</text>
<text x="1179.0" y="565.0" text-anchor="start">28k</text>
<text x="1281.0" y="565.0" text-anchor="end">29k</text>
<text x="1046.5" y="595.0">W16x31 (28)</text>
<text x="1007.0" y="595.0" text-anchor="start">31k</text>
<text x="1086.0" y="595.0" text-anchor="end">29k</text>
<text x="1125.5" y="595.0">W16x26 (24)</text>
<text x="1097.0" y="595.0" text-anchor="start">26k</text>
<text x="1154.0" y="595.0" text-anchor="end">25k</text>
<text x="1227.5" y="595.0">W18x35 (46)</text>
<text x="1174.0" y="595.0" text-anchor="start">30k</text>
<text x="1281.0" y="595.0" text-anchor="end">31k</text>
<text x="1237.0" y="578.0">C=0.75</text>
<text x="1046.5" y="625.0">W16x26 (42)</text>
<text x="1007.0" y="625.0" text-anchor="start">20k</text>
<text x="1086.0" y="625.0" text-anchor="end">27k</text>
<text x="1129.0" y="625.0">W16x26 (18)</text>
<text x="1097.0" y="625.0" text-anchor="start">27k</text>
<text x="1161.0" y="625.0" text-anchor="end">27k</text>
<text x="1227.0" y="625.0">W18x40 (70)</text>
<text x="1173.0" y="625.0" text-anchor="start">36k</text>
<text x="1281.0" y="625.0" text-anchor="end">34k</text>
<text x="1237.0" y="608.0">C=0.75</text>
<text x="1046.5" y="652.0">W16x26 (38)</text>
<text x="1007.0" y="652.0" text-anchor="start">28k</text>
<text x="1086.0" y="652.0" text-anchor="end">26k</text>
<text x="1129.0" y="652.0">W16x26 (24)</text>
<text x="1097.0" y="652.0" text-anchor="start">29k</text>
<text x="1161.0" y="652.0" text-anchor="end">29k</text>
<text x="1227.0" y="652.0">W18x40 (72)</text>
<text x="1173.0" y="652.0" text-anchor="start">39k</text>
<text x="1281.0" y="652.0" text-anchor="end">33k</text>
<text x="1237.0" y="635.0">C=0.75</text>
<text x="1046.5" y="678.5">W16x26 (38)</text>
<text x="1007.0" y="678.5" text-anchor="start">28k</text>
<text x="1086.0" y="678.5" text-anchor="end">26k</text>
<text x="1129.0" y="678.5">W16x26 (24)</text>
<text x="1097.0" y="678.5" text-anchor="start">29k</text>
<text x="1161.0" y="678.5" text-anchor="end">29k</text>
<text x="1227.0" y="678.5">W18x40 (58)</text>
<text x="1173.0" y="678.5" text-anchor="start">37k</text>
<text x="1281.0" y="678.5" text-anchor="end">33k</text>
<text x="1237.0" y="661.5">C=0.75</text>
<text x="1046.5" y="705.0">W16x26 (38)</text>
<text x="1007.0" y="705.0" text-anchor="start">28k</text>
<text x="1086.0" y="705.0" text-anchor="end">26k</text>
<text x="1129.0" y="705.0">W16x26 (24)</text>
<text x="1097.0" y="705.0" text-anchor="start">29k</text>
<text x="1161.0" y="705.0" text-anchor="end">29k</text>
<text x="1227.0" y="705.0">W18x40 (38)</text>
<text x="1173.0" y="705.0" text-anchor="start">35k</text>
<text x="1281.0" y="705.0" text-anchor="end">32k</text>
<text x="1237.0" y="688.0">C=0.75</text>
<text x="1046.5" y="731.0">W16x26 (38)</text>
<text x="1007.0" y="731.0" text-anchor="start">28k</text>
<text x="1086.0" y="731.0" text-anchor="end">26k</text>
<text x="1129.0" y="731.0">W16x26 (24)</text>
<text x="1097.0" y="731.0" text-anchor="start">29k</text>
<text x="1161.0" y="731.0" text-anchor="end">29k</text>
<text x="1227.0" y="731.0">W18x35 (70)</text>
<text x="1173.0" y="731.0" text-anchor="start">33k</text>
<text x="1281.0" y="731.0" text-anchor="end">31k</text>
<text x="1237.0" y="714.0">C=0.75</text>
<text x="1046.5" y="757.0">W16x26 (32)</text>
<text x="1007.0" y="757.0" text-anchor="start">27k</text>
<text x="1086.0" y="757.0" text-anchor="end">26k</text>
<text x="1129.0" y="757.0">W16x26 (17)</text>
<text x="1097.0" y="757.0" text-anchor="start">26k</text>
<text x="1161.0" y="757.0" text-anchor="end">26k</text>
<text x="1227.0" y="757.0">W24x76</text>
<text x="1173.0" y="757.0" text-anchor="start">48k</text>
<text x="1281.0" y="757.0" text-anchor="end">84k</text>
<text x="1237.0" y="740.0">C=1</text>
<text x="1022.0" y="552.0">(4)</text>
<text x="1062.0" y="552.0">(4)</text>
<text x="1110.0" y="552.0">1(8)</text>
<text x="1132.0" y="552.0">(3)</text>
<text x="1160.0" y="552.0">(4)</text>
<text x="1184.0" y="552.0">(4)</text>
<text transform="translate(1015.0,553.5) rotate(-90.0)">(9)</text>
<text transform="translate(1015.0,583.0) rotate(-90.0)">(3)</text>
<text transform="translate(1105.0,583.0) rotate(-90.0)">(3)</text>
<text transform="translate(1015.0,613.0) rotate(-90.0)">(9)</text>
<text transform="translate(1105.0,613.0) rotate(-90.0)">(8)</text>
<text transform="translate(1015.0,641.5) rotate(-90.0)">(2)</text>
<text transform="translate(1105.0,641.5) rotate(-90.0)">(6)</text>
<text transform="translate(1181.0,641.5) rotate(-90.0)">(3)</text>
<text transform="translate(1015.0,668.2) rotate(-90.0)">(2)</text>
<text transform="translate(1105.0,668.2) rotate(-90.0)">(2)</text>
<text transform="translate(1181.0,668.2) rotate(-90.0)">(2)</text>
<text transform="translate(1015.0,694.8) rotate(-90.0)">(2)</text>
<text transform="translate(1105.0,694.8) rotate(-90.0)">(2)</text>
<text transform="translate(1181.0,694.8) rotate(-90.0)">(2)</text>
<text transform="translate(1015.0,721.0) rotate(-90.0)">(2)</text>
<text transform="translate(1105.0,721.0) rotate(-90.0)">(2)</text>
<text transform="translate(1181.0,721.0) rotate(-90.0)">(2)</text>
<text transform="translate(1015.0,747.0) rotate(-90.0)">(7)</text>
<text transform="translate(1105.0,747.0) rotate(-90.0)">(6)</text>
<text transform="translate(1181.0,747.0) rotate(-90.0)">(1)</text>
<text transform="translate(1088.5,584.0) rotate(-90.0)">W24x55</text>
<text transform="translate(1088.5,627.0) rotate(-90.0)" text-anchor="start">38k</text>
<text transform="translate(1088.5,541.0) rotate(-90.0)" text-anchor="end">39k</text>
<text transform="translate(1088.5,694.0) rotate(-90.0)">W33x118</text>
<text transform="translate(1088.5,759.0) rotate(-90.0)" text-anchor="start">104k</text>
<text transform="translate(1088.5,629.0) rotate(-90.0)" text-anchor="end">104k</text>
<text transform="translate(1163.5,694.0) rotate(-90.0)">W33x118</text>
<text transform="translate(1163.5,759.0) rotate(-90.0)" text-anchor="start">128k</text>
<text transform="translate(1163.5,629.0) rotate(-90.0)" text-anchor="end">28k</text>
<text x="1047.0" y="779.5">W16x26 (30)</text>
<text x="1007.0" y="779.5" text-anchor="start">26k</text>
<text x="1087.0" y="779.5" text-anchor="end">26k</text>
<text x="1130.0" y="779.5">W14x22 (18)</text>
<text x="1098.0" y="779.5" text-anchor="start">23k</text>
<text x="1162.0" y="779.5" text-anchor="end">23k</text>
<text x="1047.0" y="801.5">W16x26 (50)</text>
<text x="1007.0" y="801.5" text-anchor="start">29k</text>
<text x="1087.0" y="801.5" text-anchor="end">28k</text>
<text x="1130.0" y="801.5">W14x22 (24)</text>
<text x="1098.0" y="801.5" text-anchor="start">23k</text>
<text x="1162.0" y="801.5" text-anchor="end">23k</text>
<text x="1047.0" y="832.0">W16x31 (28)</text>
<text x="1007.0" y="832.0" text-anchor="start">31k</text>
<text x="1087.0" y="832.0" text-anchor="end">29k</text>
<text x="1130.0" y="832.0">W14x22 (24)</text>
<text x="1098.0" y="832.0" text-anchor="start">23k</text>
<text x="1162.0" y="832.0" text-anchor="end">23k</text>
<text x="1047.0" y="862.0">W16x31 (28)</text>
<text x="1007.0" y="862.0" text-anchor="start">31k</text>
<text x="1087.0" y="862.0" text-anchor="end">29k</text>
<text x="1130.0" y="862.0">W14x22 (24)</text>
<text x="1098.0" y="862.0" text-anchor="start">23k</text>
<text x="1162.0" y="862.0" text-anchor="end">23k</text>
<text x="1047.0" y="890.5">W24x55 (28)</text>
<text x="1007.0" y="890.5" text-anchor="start">66k</text>
<text x="1087.0" y="890.5" text-anchor="end">64k</text>
<text x="1130.0" y="890.5">W21x44 (38)</text>
<text x="1098.0" y="890.5" text-anchor="start">52k</text>
<text x="1162.0" y="890.5" text-anchor="end">53k</text>
<text x="1211.0" y="779.5">W16x26 (30)</text>
<text x="1173.0" y="779.5" text-anchor="start">26k</text>
<text x="1249.0" y="779.5" text-anchor="end">26k</text>
<text x="1211.0" y="801.5">W24x55 (26)</text>
<text x="1173.0" y="801.5" text-anchor="start">52k</text>
<text x="1249.0" y="801.5" text-anchor="end">52k</text>
<text x="1212.0" y="774.0">(30)</text>
<text x="1272.0" y="774.0">(13)</text>
<text transform="translate(1268.0,796.0) rotate(-90.0)">(7)</text>
<text transform="translate(999.0,849.0) rotate(-90.0)">W27x84</text>
<text transform="translate(999.0,893.0) rotate(-90.0)" text-anchor="start">81k</text>
<text transform="translate(999.0,805.0) rotate(-90.0)" text-anchor="end">81k</text>
<text transform="translate(999.0,783.0) rotate(-90.0)">W10x68</text>
<text transform="translate(999.0,763.0) rotate(-90.0)" text-anchor="end">81k</text>
<text transform="translate(1088.0,828.0) rotate(-90.0)">W21x55 75k</text>
<text transform="translate(1088.0,893.0) rotate(-90.0)" text-anchor="start">75k</text>
<text transform="translate(1088.0,763.0) rotate(-90.0)" text-anchor="end">100k</text>
<text transform="translate(1163.0,828.0) rotate(-90.0)">W24x68 63k</text>
<text transform="translate(1163.0,893.0) rotate(-90.0)" text-anchor="start">63k</text>
<text transform="translate(1163.0,763.0) rotate(-90.0)" text-anchor="end">56k</text>
<text transform="translate(1015.0,771.0) rotate(-90.0)">(7)</text>
<text transform="translate(1105.0,771.0) rotate(-90.0)">(9)</text>
<text transform="translate(1181.0,771.0) rotate(-90.0)">(20)</text>
<text transform="translate(1015.0,793.5) rotate(-90.0)">(7)</text>
<text transform="translate(1105.0,793.5) rotate(-90.0)">(9)</text>
<text transform="translate(1181.0,793.5) rotate(-90.0)">(10)</text>
<text transform="translate(1015.0,820.0) rotate(-90.0)">(5)</text>
<text transform="translate(1105.0,820.0) rotate(-90.0)">(8)</text>
<text transform="translate(1181.0,820.0) rotate(-90.0)">(13)</text>
<text transform="translate(1015.0,850.0) rotate(-90.0)">(3)</text>
<text transform="translate(1105.0,850.0) rotate(-90.0)">(3)</text>
<text transform="translate(1181.0,850.0) rotate(-90.0)">(10)</text>
<text transform="translate(1015.0,879.0) rotate(-90.0)">(5)</text>
<text transform="translate(1105.0,879.0) rotate(-90.0)">(8)</text>
<text transform="translate(1181.0,879.0) rotate(-90.0)">(14)</text>
<text transform="translate(956.2,357.6) rotate(-18.0)">W27x84</text>
<text transform="translate(914.2,371.3) rotate(-18.0)" text-anchor="start">52k</text>
<text transform="translate(998.3,343.9) rotate(-18.0)" text-anchor="end">52k</text>
<text transform="translate(1178.6,583.2) rotate(-71.2)">W27x84</text>
<text transform="translate(1164.0,626.2) rotate(-71.2)" text-anchor="start">52k</text>
<text transform="translate(1193.3,540.1) rotate(-71.2)" text-anchor="end">53k</text>
<text transform="translate(1165.2,495.0) rotate(75.0)">W21x44</text>
<text transform="translate(1154.8,456.0) rotate(75.0)" text-anchor="start">28k</text>
<text transform="translate(1175.7,534.0) rotate(75.0)" text-anchor="end">27k</text>
<text transform="translate(1139.1,502.0) rotate(75.0)">W18x35</text>
<text transform="translate(1130.5,470.0) rotate(75.0)" text-anchor="start">23k</text>
<text transform="translate(1147.7,534.0) rotate(75.0)" text-anchor="end">23k</text>
<text transform="translate(1113.0,509.0) rotate(75.0)">W16x26</text>
<text transform="translate(1106.3,483.9) rotate(75.0)" text-anchor="start">20k</text>
<text transform="translate(1119.8,534.0) rotate(75.0)" text-anchor="end">20k</text>
<text transform="translate(1087.0,516.0) rotate(75.0)">W8x10</text>
<text transform="translate(1091.8,534.0) rotate(75.0)" text-anchor="end">9k</text>
<text transform="translate(1121.2,418.8) rotate(45.0)">W21x44</text>
<text transform="translate(1092.7,390.2) rotate(45.0)" text-anchor="start">28k</text>
<text transform="translate(1149.8,447.3) rotate(45.0)" text-anchor="end">28k</text>
<text transform="translate(1102.1,437.9) rotate(45.0)">W18x35</text>
<text transform="translate(1078.7,414.4) rotate(45.0)" text-anchor="start">23k</text>
<text transform="translate(1125.6,461.3) rotate(45.0)" text-anchor="end">23k</text>
<text transform="translate(1083.0,457.0) rotate(45.0)">W16x26</text>
<text transform="translate(1064.7,438.7) rotate(45.0)" text-anchor="start">21k</text>
<text transform="translate(1101.3,475.3) rotate(45.0)" text-anchor="end">20k</text>
<text transform="translate(1063.9,476.1) rotate(45.0)">W10x60</text>
<text transform="translate(1077.1,489.3) rotate(45.0)" text-anchor="end">26k</text>
<text transform="translate(1045.0,374.8) rotate(15.0)">W21x44</text>
<text transform="translate(1006.0,364.3) rotate(15.0)" text-anchor="start">27k</text>
<text transform="translate(1084.0,385.2) rotate(15.0)" text-anchor="end">28k</text>
<text transform="translate(1038.0,400.9) rotate(15.0)">W18x35</text>
<text transform="translate(1006.0,392.3) rotate(15.0)" text-anchor="start">23k</text>
<text transform="translate(1070.0,409.5) rotate(15.0)" text-anchor="end">25k</text>
<text transform="translate(1031.0,427.0) rotate(15.0)">W16x26</text>
<text transform="translate(1006.0,420.2) rotate(15.0)" text-anchor="start">19k</text>
<text transform="translate(1056.1,433.7) rotate(15.0)" text-anchor="end">26k</text>
<text transform="translate(1024.0,453.0) rotate(15.0)">W12x96</text>
<text transform="translate(1042.1,457.9) rotate(15.0)" text-anchor="end">9k</text>
<text transform="translate(841.6,581.7) rotate(75.0)">W21x44</text>
<text transform="translate(831.2,542.7) rotate(75.0)" text-anchor="start">27k</text>
<text transform="translate(852.1,620.7) rotate(75.0)" text-anchor="end">28k</text>
<text transform="translate(867.7,574.7) rotate(75.0)">W18x35</text>
<text transform="translate(859.1,542.7) rotate(75.0)" text-anchor="start">23k</text>
<text transform="translate(876.3,606.7) rotate(75.0)" text-anchor="end">25k</text>
<text transform="translate(893.8,567.7) rotate(75.0)">W16x26</text>
<text transform="translate(887.1,542.7) rotate(75.0)" text-anchor="start">19k</text>
<text transform="translate(900.5,592.8) rotate(75.0)" text-anchor="end">26k</text>
<text transform="translate(919.9,560.7) rotate(75.0)">W10x60</text>
<text transform="translate(924.7,578.8) rotate(75.0)" text-anchor="end">9k</text>
<text transform="translate(884.3,655.7) rotate(45.0)">W21x44</text>
<text transform="translate(855.8,627.1) rotate(45.0)" text-anchor="start">28k</text>
<text transform="translate(912.9,684.2) rotate(45.0)" text-anchor="end">28k</text>
<text transform="translate(903.4,636.6) rotate(45.0)">W18x35</text>
<text transform="translate(880.0,613.1) rotate(45.0)" text-anchor="start">25k</text>
<text transform="translate(926.9,660.0) rotate(45.0)" text-anchor="end">33k</text>
<text transform="translate(922.5,617.5) rotate(45.0)">W16x26</text>
<text transform="translate(904.2,599.2) rotate(45.0)" text-anchor="start">21k</text>
<text transform="translate(940.8,635.8) rotate(45.0)" text-anchor="end">20k</text>
<text transform="translate(941.6,598.4) rotate(45.0)">W10x68</text>
<text transform="translate(954.8,611.6) rotate(45.0)" text-anchor="end">26k</text>
<text transform="translate(958.3,698.4) rotate(15.0)">W21x44</text>
<text transform="translate(919.3,687.9) rotate(15.0)" text-anchor="start">28k</text>
<text transform="translate(997.3,708.8) rotate(15.0)" text-anchor="end">27k</text>
<text transform="translate(965.3,672.3) rotate(15.0)">W18x35</text>
<text transform="translate(933.3,663.7) rotate(15.0)" text-anchor="start">25k</text>
<text transform="translate(997.3,680.9) rotate(15.0)" text-anchor="end">33k</text>
<text transform="translate(972.3,646.2) rotate(15.0)">W16x26</text>
<text transform="translate(947.2,639.5) rotate(15.0)" text-anchor="start">20k</text>
<text transform="translate(997.3,652.9) rotate(15.0)" text-anchor="end">16k</text>
<text transform="translate(979.3,620.1) rotate(15.0)">W8x10</text>
<text transform="translate(997.3,625.0) rotate(15.0)" text-anchor="end">9k</text>
<text transform="translate(1070.1,414.3) rotate(-60.0)">W16x26 9</text>
<text transform="translate(1046.8,454.6) rotate(-60.0)" text-anchor="start">30k</text>
<text transform="translate(1123.2,465.6) rotate(-30.0)">W10x22</text>
<text transform="translate(1163.4,442.3) rotate(-30.0)" text-anchor="end">20k</text>
<text transform="translate(876.3,608.1) rotate(-30.0)">W10x30 9</text>
<text transform="translate(927.6,661.2) rotate(-60.0)">W16x26</text>
<text transform="translate(950.8,620.9) rotate(-60.0)" text-anchor="end">9k</text>
<text transform="translate(1020.2,467.5) rotate(15.0)">W10x30</text>
<text transform="translate(1040.9,473.1) rotate(15.0)" text-anchor="end">7k</text>
<text transform="translate(1053.4,486.6) rotate(45.0)">W10x30</text>
<text transform="translate(1068.6,501.9) rotate(45.0)" text-anchor="end">9k</text>
<text transform="translate(943.3,596.7) rotate(45.0)">W10x30</text>
<text transform="translate(958.6,611.9) rotate(45.0)" text-anchor="end">9k</text>
<text transform="translate(979.9,617.8) rotate(15.0)">W12x30</text>
<text transform="translate(1000.7,623.3) rotate(15.0)" text-anchor="end">7k</text>
<text transform="translate(1042.8,495.7) rotate(45.4)">W6x15</text>
<text transform="translate(1022.8,515.8) rotate(45.9)">1W6x8</text>
<text transform="translate(1037.1,530.5) rotate(45.9)" text-anchor="end">8k</text>
<text transform="translate(1012.0,357.0) rotate(-90.0)">(7)</text>
<text transform="translate(1012.0,385.0) rotate(-90.0)">(4)</text>
<text transform="translate(1012.0,413.0) rotate(-90.0)">(3)</text>
<text transform="translate(1012.0,441.0) rotate(-90.0)">(8)</text>
<text transform="translate(1012.0,480.0) rotate(-90.0)">(4)</text>
<text transform="translate(1012.0,515.0) rotate(-90.0)">(4)</text>
<text x="1046.0" y="533.0">20k W16x26 19k</text>
<text x="1142.0" y="533.0">47k  W24x62   52k</text>
<text x="1243.0" y="533.0">W24x55 (28) 23k</text>
<text transform="translate(999.0,494.5) rotate(-90.0)">W16x26</text>
<text transform="translate(999.0,538.0) rotate(-90.0)" text-anchor="start">20k</text>
<text transform="translate(999.0,451.0) rotate(-90.0)" text-anchor="end">19k</text>
<text transform="translate(1026.9,341.9) rotate(7.5)">W36x35 (6)</text>
<text transform="translate(1002.3,338.7) rotate(7.5)" text-anchor="start">36k</text>
<text transform="translate(1051.6,345.1) rotate(7.5)" text-anchor="end">36k</text>
<text transform="translate(1024.4,341.6) rotate(7.5)">W16x31 (6)</text>
<text transform="translate(1077.1,355.3) rotate(22.5)">W36x35 (6)</text>
<text transform="translate(1054.1,345.8) rotate(22.5)" text-anchor="start">36k</text>
<text transform="translate(1100.0,364.8) rotate(22.5)" text-anchor="end">36k</text>
<text transform="translate(1122.0,381.3) rotate(37.5)">W36x35 (6)</text>
<text transform="translate(1102.3,366.2) rotate(37.5)" text-anchor="start">36k</text>
<text transform="translate(1141.7,396.4) rotate(37.5)" text-anchor="end">36k</text>
<text transform="translate(1120.0,379.7) rotate(37.5)">W16x31 (6)</text>
<text transform="translate(1158.7,418.0) rotate(52.5)">W36x35 (6)</text>
<text transform="translate(1143.6,398.3) rotate(52.5)" text-anchor="start">36k</text>
<text transform="translate(1173.8,437.7) rotate(52.5)" text-anchor="end">36k</text>
<text transform="translate(1184.7,462.9) rotate(67.5)">W36x35 (6)</text>
<text transform="translate(1175.2,440.0) rotate(67.5)" text-anchor="start">36k</text>
<text transform="translate(1194.2,485.9) rotate(67.5)" text-anchor="end">36k</text>
<text transform="translate(1198.1,513.1) rotate(82.5)">W36x35 (6)</text>
<text transform="translate(1194.9,488.4) rotate(82.5)" text-anchor="start">36k</text>
<text transform="translate(1201.3,537.7) rotate(82.5)" text-anchor="end">36k</text>
<text transform="translate(814.3,563.6) rotate(82.5)">W8x10</text>
<text transform="translate(817.4,587.6) rotate(82.5)" text-anchor="end">38k</text>
<text transform="translate(814.6,566.1) rotate(82.5)">W6x38</text>
<text transform="translate(817.4,587.6) rotate(82.5)" text-anchor="end">8k</text>
<text transform="translate(827.0,611.1) rotate(67.5)">W8x10</text>
<text transform="translate(836.2,633.4) rotate(67.5)" text-anchor="end">38k</text>
<text transform="translate(828.0,613.4) rotate(67.5)">W6x38</text>
<text transform="translate(836.2,633.4) rotate(67.5)" text-anchor="end">8k</text>
<text transform="translate(851.6,653.7) rotate(52.5)">W8x10</text>
<text transform="translate(866.3,672.9) rotate(52.5)" text-anchor="end">38k</text>
<text transform="translate(853.1,655.7) rotate(52.5)">W6x38</text>
<text transform="translate(866.3,672.9) rotate(52.5)" text-anchor="end">8k</text>
<text transform="translate(886.3,688.4) rotate(37.5)">W8x10</text>
<text transform="translate(905.5,703.2) rotate(37.5)" text-anchor="end">38k</text>
<text transform="translate(888.3,690.0) rotate(37.5)">W6x38</text>
<text transform="translate(905.5,703.2) rotate(37.5)" text-anchor="end">8k</text>
<text transform="translate(928.9,713.0) rotate(22.5)">W8x10</text>
<text transform="translate(951.3,722.3) rotate(22.5)" text-anchor="end">38k</text>
<text transform="translate(931.2,714.0) rotate(22.5)">W6x38</text>
<text transform="translate(951.3,722.3) rotate(22.5)" text-anchor="end">8k</text>
<text transform="translate(976.4,725.7) rotate(7.5)">W8x10</text>
<text transform="translate(1000.4,728.9) rotate(7.5)" text-anchor="end">38k</text>
<text transform="translate(978.9,726.1) rotate(7.5)">W6x38</text>
<text transform="translate(1000.4,728.9) rotate(7.5)" text-anchor="end">8k</text>
<text transform="translate(786.3,549.5) rotate(87.2)">(21)</text>
<text transform="translate(789.1,545.8) rotate(87.2)">26k</text>
<text transform="translate(783.5,553.4) rotate(87.2)">38k</text>
<text transform="translate(791.1,545.3) rotate(177.2)">(3)</text>
<text transform="translate(790.9,539.4) rotate(177.2)">W8</text>
<text transform="translate(791.4,551.2) rotate(177.2)">2k</text>
<text transform="translate(788.3,570.5) rotate(81.6)">(21)</text>
<text transform="translate(790.8,566.5) rotate(81.6)">26k</text>
<text transform="translate(785.9,574.7) rotate(81.6)">38k</text>
<text transform="translate(792.7,565.9) rotate(171.6)">(3)</text>
<text transform="translate(791.9,560.0) rotate(171.6)">W8</text>
<text transform="translate(793.6,571.6) rotate(171.6)">2k</text>
<text transform="translate(792.4,591.2) rotate(75.9)">(21)</text>
<text transform="translate(794.5,587.0) rotate(75.9)">26k</text>
<text transform="translate(790.5,595.6) rotate(75.9)">38k</text>
<text transform="translate(796.3,586.1) rotate(165.9)">(3)</text>
<text transform="translate(795.0,580.4) rotate(165.9)">W8</text>
<text transform="translate(797.8,591.8) rotate(165.9)">2k</text>
<text transform="translate(798.6,611.4) rotate(70.3)">(21)</text>
<text transform="translate(800.2,607.0) rotate(70.3)">26k</text>
<text transform="translate(797.0,615.9) rotate(70.3)">38k</text>
<text transform="translate(801.9,606.0) rotate(160.3)">(3)</text>
<text transform="translate(800.0,600.4) rotate(160.3)">W8</text>
<text transform="translate(804.0,611.5) rotate(160.3)">2k</text>
<text transform="translate(806.6,630.9) rotate(64.7)">(21)</text>
<text transform="translate(807.8,626.3) rotate(64.7)">26k</text>
<text transform="translate(805.6,635.6) rotate(64.7)">38k</text>
<text transform="translate(809.5,625.2) rotate(154.7)">(3)</text>
<text transform="translate(807.0,619.8) rotate(154.7)">W8</text>
<text transform="translate(812.0,630.4) rotate(154.7)">2k</text>
<text transform="translate(816.6,649.5) rotate(59.1)">(21)</text>
<text transform="translate(817.3,644.9) rotate(59.1)">26k</text>
<text transform="translate(816.0,654.3) rotate(59.1)">38k</text>
<text transform="translate(818.8,643.5) rotate(149.1)">(3)</text>
<text transform="translate(815.9,638.5) rotate(149.1)">W8</text>
<text transform="translate(821.9,648.5) rotate(149.1)">2k</text>
<text transform="translate(828.3,667.1) rotate(53.4)">(21)</text>
<text transform="translate(828.6,662.4) rotate(53.4)">26k</text>
<text transform="translate(828.2,671.8) rotate(53.4)">38k</text>
<text transform="translate(829.9,660.9) rotate(143.4)">(3)</text>
<text transform="translate(826.5,656.1) rotate(143.4)">W8</text>
<text transform="translate(833.5,665.5) rotate(143.4)">2k</text>
<text transform="translate(841.7,683.4) rotate(47.8)">(21)</text>
<text transform="translate(841.5,678.7) rotate(47.8)">26k</text>
<text transform="translate(842.0,688.1) rotate(47.8)">38k</text>
<text transform="translate(842.7,677.1) rotate(137.8)">(3)</text>
<text transform="translate(838.8,672.7) rotate(137.8)">W8</text>
<text transform="translate(846.7,681.4) rotate(137.8)">2k</text>
<text transform="translate(856.6,698.3) rotate(42.2)">(21)</text>
<text transform="translate(856.0,693.6) rotate(42.2)">26k</text>
<text transform="translate(857.4,703.0) rotate(42.2)">38k</text>
<text transform="translate(857.0,691.9) rotate(132.2)">(3)</text>
<text transform="translate(852.7,687.9) rotate(132.2)">W8</text>
<text transform="translate(861.4,695.8) rotate(132.2)">2k</text>
<text transform="translate(872.9,711.7) rotate(36.6)">(21)</text>
<text transform="translate(871.8,707.1) rotate(36.6)">26k</text>
<text transform="translate(874.2,716.3) rotate(36.6)">38k</text>
<text transform="translate(872.7,705.3) rotate(126.6)">(3)</text>
<text transform="translate(868.0,701.7) rotate(126.6)">W8</text>
<text transform="translate(877.4,708.7) rotate(126.6)">2k</text>
<text transform="translate(890.5,723.4) rotate(30.9)">(21)</text>
<text transform="translate(888.9,718.9) rotate(30.9)">26k</text>
<text transform="translate(892.1,727.9) rotate(30.9)">38k</text>
<text transform="translate(889.6,717.1) rotate(120.9)">(3)</text>
<text transform="translate(884.6,714.0) rotate(120.9)">W8</text>
<text transform="translate(894.7,720.0) rotate(120.9)">2k</text>
<text transform="translate(909.1,733.4) rotate(25.3)">(21)</text>
<text transform="translate(907.1,729.1) rotate(25.3)">26k</text>
<text transform="translate(911.2,737.6) rotate(25.3)">38k</text>
<text transform="translate(907.6,727.1) rotate(115.3)">(3)</text>
<text transform="translate(902.3,724.5) rotate(115.3)">W8</text>
<text transform="translate(912.9,729.6) rotate(115.3)">2k</text>
<text transform="translate(928.6,741.4) rotate(19.7)">(21)</text>
<text transform="translate(926.2,737.4) rotate(19.7)">26k</text>
<text transform="translate(931.1,745.5) rotate(19.7)">38k</text>
<text transform="translate(926.5,735.4) rotate(109.7)">(3)</text>
<text transform="translate(921.0,733.3) rotate(109.7)">W8</text>
<text transform="translate(932.0,737.3) rotate(109.7)">2k</text>
<text transform="translate(948.8,747.6) rotate(14.1)">(21)</text>
<text transform="translate(946.0,743.7) rotate(14.1)">26k</text>
<text transform="translate(951.7,751.3) rotate(14.1)">38k</text>
<text transform="translate(946.1,741.7) rotate(104.1)">(3)</text>
<text transform="translate(940.4,740.2) rotate(104.1)">W8</text>
<text transform="translate(951.8,743.1) rotate(104.1)">2k</text>
<text transform="translate(969.5,751.7) rotate(8.4)">(21)</text>
<text transform="translate(966.3,748.1) rotate(8.4)">26k</text>
<text transform="translate(972.7,755.2) rotate(8.4)">38k</text>
<text transform="translate(966.2,746.1) rotate(98.4)">(3)</text>
<text transform="translate(960.4,745.2) rotate(98.4)">W8</text>
<text transform="translate(972.0,746.9) rotate(98.4)">2k</text>
<text transform="translate(990.5,753.7) rotate(2.8)">(21)</text>
<text transform="translate(987.0,750.5) rotate(2.8)">26k</text>
<text transform="translate(994.0,756.9) rotate(2.8)">38k</text>
<text transform="translate(986.7,748.6) rotate(92.8)">(3)</text>
<text transform="translate(980.8,748.2) rotate(92.8)">W8</text>
<text transform="translate(992.6,748.8) rotate(92.8)">2k</text></g></svg>
<svg class="a" style="left:0;top:0" width="1920" height="1080" viewBox="0 0 1920 1080"><path d="M7.5 48.5H15.5L18.5 51.5V62.5H7.5Z" fill="#fff" stroke="#000" stroke-width="1.2"/>
<path d="M30 53H36L37 54H44V62H30Z" fill="#f0e040" stroke="#000"/><path d="M32 57H46L43 62H30Z" fill="#8a8a40" stroke="#000"/><path d="M38 51Q41 47 44 50" stroke="#000" fill="none"/>
<rect x="55.5" y="49.5" width="13" height="13" fill="#20d0e0" stroke="#000"/><rect x="58" y="50" width="8" height="5" fill="#fff"/><rect x="58" y="58" width="8" height="4" fill="#303030"/>
<line x1="79.5" y1="47" x2="79.5" y2="68" stroke="#8a8a8a"/><line x1="80.5" y1="47" x2="80.5" y2="68" stroke="#f6f6f6"/>
<rect x="88.5" y="49.5" width="8" height="9" fill="#fff" stroke="#000"/><rect x="93.5" y="53.5" width="8" height="9" fill="#fff" stroke="#000"/><path d="M95 56H100M95 58H100M95 60H100" stroke="#000"/>
<line x1="111.5" y1="47" x2="111.5" y2="68" stroke="#8a8a8a"/><line x1="112.5" y1="47" x2="112.5" y2="68" stroke="#f6f6f6"/>
<rect x="121" y="54" width="15" height="7" rx="2" fill="#606060" stroke="#000"/><rect x="124" y="50" width="9" height="5" fill="#fff" stroke="#000"/><rect x="123" y="57" width="11" height="2" fill="#c0c0c0"/>
<line x1="145.5" y1="47" x2="145.5" y2="68" stroke="#8a8a8a"/><line x1="146.5" y1="47" x2="146.5" y2="68" stroke="#f6f6f6"/>
<path d="M158 58Q163 52 168 58" stroke="#000" stroke-width="2" fill="none"/><path d="M156 55L158 60L162 57Z" fill="#20e020" stroke="#000" stroke-width=".5"/>
<path d="M179 58Q184 52 189 58" stroke="#000" stroke-width="2" fill="none"/><path d="M191 55L189 60L185 57Z" fill="#20e020" stroke="#000" stroke-width=".5"/>
<line x1="203.5" y1="47" x2="203.5" y2="68" stroke="#8a8a8a"/><line x1="204.5" y1="47" x2="204.5" y2="68" stroke="#f6f6f6"/>
<circle cx="219.5" cy="57" r="8" fill="#1a2a8a"/><path d="M214 52Q218 55 216 59Q220 61 223 64L225 61Q222 57 224 53Q220 50 214 52Z" fill="#208a20"/>
<text x="237" y="55" font-size="8" font-weight="bold" fill="#20e020" font-family="Liberation Sans">in</text><rect x="236" y="58" width="16" height="6" fill="#20e020"/><path d="M239 60V64M243 60V64M247 60V64" stroke="#000"/>
<line x1="261.5" y1="47" x2="261.5" y2="68" stroke="#8a8a8a"/><line x1="262.5" y1="47" x2="262.5" y2="68" stroke="#f6f6f6"/>
<path d="M271 50H283V53H279V60H283V63H271V60H275V53H271Z" fill="#909090" stroke="#000"/>
<rect x="293.5" y="49.5" width="17" height="14" fill="none" stroke="#000" stroke-width="1.3"/><rect x="296" y="52" width="3" height="3"/><rect x="305" y="52" width="3" height="3"/><rect x="296" y="58" width="3" height="3"/><rect x="305" y="58" width="3" height="3"/>
<g stroke="#2030c0" fill="none"><rect x="320.5" y="49.5" width="13" height="12"/><path d="M324.5 49V62M328.5 49V62M320 53.5H334M320 57.5H334"/></g><g fill="#fff" stroke="#2030c0"><circle cx="322" cy="63" r="1.3"/><circle cx="326" cy="63" r="1.3"/><circle cx="330" cy="63" r="1.3"/></g>
<line x1="344.5" y1="47" x2="344.5" y2="68" stroke="#8a8a8a"/><line x1="345.5" y1="47" x2="345.5" y2="68" stroke="#f6f6f6"/>
<g stroke="#000" fill="#fff"><rect x="353.5" y="50.5" width="12" height="11"/></g><path d="M357.5 50V62M361.5 50V62M353 54.5H366M353 58.5H366" stroke="#000"/>
<g stroke="#000" fill="#fff"><rect x="378.5" y="50.5" width="12" height="11"/></g><path d="M382.5 50V62M386.5 50V62M378 54.5H391M378 58.5H391" stroke="#000"/><path d="M377 49L392 63M392 49L377 63" stroke="#f00" stroke-width="2.2"/>
<line x1="402.5" y1="47" x2="402.5" y2="68" stroke="#8a8a8a"/><line x1="403.5" y1="47" x2="403.5" y2="68" stroke="#f6f6f6"/>
<rect x="411.5" y="50.5" width="13" height="13" fill="#fff" stroke="#000" stroke-width="1.2"/><path d="M414 53H422V61L418 57L414 61Z" fill="none" stroke="#000"/>
<rect x="435.5" y="50.5" width="14" height="13" fill="#f0f040" stroke="#000"/><path d="M440 50V64M445 50V64M435 54H450M435 57H450M435 60H450" stroke="#000"/><rect x="436" y="51" width="4" height="3" fill="#20c020"/>
<line x1="460.5" y1="47" x2="460.5" y2="68" stroke="#8a8a8a"/><line x1="461.5" y1="47" x2="461.5" y2="68" stroke="#f6f6f6"/>
<rect x="469.5" y="50.5" width="10" height="10" fill="#fff" stroke="#000"/><rect x="473" y="54" width="9" height="8" fill="#d0d040" stroke="#000"/><path d="M467 57L471 62L483 51" stroke="#f00" stroke-width="2.5" fill="none"/>
<line x1="492.5" y1="47" x2="492.5" y2="68" stroke="#8a8a8a"/><line x1="493.5" y1="47" x2="493.5" y2="68" stroke="#f6f6f6"/>
<text x="497" y="62" font-size="13" font-weight="bold" fill="#109010" font-family="Liberation Sans">LC</text>
<line x1="526.5" y1="47" x2="526.5" y2="68" stroke="#8a8a8a"/><line x1="527.5" y1="47" x2="527.5" y2="68" stroke="#f6f6f6"/>
<rect x="537" y="54" width="9" height="2" fill="#20d020"/><rect x="537" y="58" width="9" height="2" fill="#20d020"/>
<rect x="562" y="50" width="5" height="14" fill="#505050"/><rect x="567" y="52" width="9" height="10" fill="#40a0a0"/><path d="M563 51V63M565 51V63" stroke="#a0a0a0"/>
<line x1="587.5" y1="47" x2="587.5" y2="68" stroke="#8a8a8a"/><line x1="588.5" y1="47" x2="588.5" y2="68" stroke="#f6f6f6"/>
<path d="M594.5 49.5H603.5L607.5 53.5V63.5H594.5Z" fill="#fff" stroke="#000" stroke-width="1.2"/><path d="M597 55H605M597 57.5H605M597 60H605" stroke="#000"/>
<line x1="618.5" y1="47" x2="618.5" y2="68" stroke="#8a8a8a"/><line x1="619.5" y1="47" x2="619.5" y2="68" stroke="#f6f6f6"/>
<path d="M627.5 49.5H636.5L640.5 53.5V63.5H627.5Z" fill="#fff" stroke="#000" stroke-width="1.2"/><path d="M632 56L641 64" stroke="#f0d020" stroke-width="3"/><path d="M630 58H634" stroke="#000"/>
<line x1="651.5" y1="47" x2="651.5" y2="68" stroke="#8a8a8a"/><line x1="652.5" y1="47" x2="652.5" y2="68" stroke="#f6f6f6"/>
<rect x="654" y="46" width="24" height="22" fill="#cfcfcf" stroke="#e8e8e8"/><rect x="679" y="46" width="24" height="22" fill="#cfcfcf" stroke="#e8e8e8"/>
<rect x="661.5" y="49.5" width="11" height="14" fill="#fff" stroke="#000"/><rect x="662" y="50" width="10" height="2" fill="#1a1a9a"/><text x="663" y="62" font-size="10" fill="#e00000" font-family="Liberation Sans">D</text>
<rect x="686.5" y="49.5" width="11" height="14" fill="#fff" stroke="#000"/><rect x="687" y="50" width="10" height="2" fill="#1a1a9a"/><text x="688" y="62" font-size="10" fill="#e00000" font-family="Liberation Sans">R</text>
<line x1="707.5" y1="47" x2="707.5" y2="68" stroke="#8a8a8a"/><line x1="708.5" y1="47" x2="708.5" y2="68" stroke="#f6f6f6"/>
<path d="M716 57L724 63L732 57V59L724 65L716 59Z" fill="#fff" stroke="#303030" stroke-width=".8"/><path d="M716 57L723 49L732 54L724 62Z" fill="#9a2a9a" stroke="#303030" stroke-width=".8"/><text x="721" y="59" font-size="8" font-weight="bold" fill="#f0e020" font-family="Liberation Sans">?</text>
<circle cx="752" cy="54" r="3.5" fill="#fff" stroke="#000" stroke-width="1.5"/><path d="M749 57L745 61" stroke="#000" stroke-width="2"/>
<rect x="3.5" y="76.5" width="16" height="15" fill="#fff" stroke="#808080"/><rect x="6" y="80" width="11" height="9" fill="#000090"/><text x="7" y="87" font-size="9" font-weight="bold" fill="#20e0f0" font-family="Liberation Sans">m</text>
<rect x="25.5" y="74.5" width="115" height="22" fill="#fff" stroke="#808080"/><rect x="26" y="75" width="114" height="1" fill="#404040"/>
<rect x="124" y="76" width="16" height="20" fill="#e8e8e8" stroke="#a0a0a0"/>
<path d="M128.5 84.5H135.5L132 88Z" fill="#000"/>
<text x="30" y="91" font-size="11.9" fill="#000" font-family="Liberation Sans">1: Floor Plan 1</text>
<rect x="148" y="79" width="15" height="11" fill="#000"/><ellipse cx="155.5" cy="84.5" rx="4" ry="2.8" fill="none" stroke="#fff" stroke-width="1.3"/>
<line x1="171.5" y1="75" x2="171.5" y2="97" stroke="#8a8a8a"/><line x1="172.5" y1="75" x2="172.5" y2="97" stroke="#f6f6f6"/>
<text x="180" y="90" font-size="13" fill="#1a1a9a" font-family="Liberation Sans">Iso</text><text x="204" y="90" font-size="13" fill="#1a1a9a" font-family="Liberation Sans">Pln</text>
<path d="M234 78A7 7 0 1 1 233 89" fill="none" stroke="#f01010" stroke-width="1.2"/><path d="M231 76L236 78L232 82Z" fill="#f01010"/><text x="231" y="89" font-size="10" fill="#1a1a9a" font-family="Liberation Sans">+X</text>
<path d="M259 78A7 7 0 1 1 258 89" fill="none" stroke="#f01010" stroke-width="1.2"/><path d="M256 76L261 78L257 82Z" fill="#f01010"/><text x="256" y="89" font-size="10" fill="#1a1a9a" font-family="Liberation Sans">+Y</text>
<path d="M284 78A7 7 0 1 1 283 89" fill="none" stroke="#f01010" stroke-width="1.2"/><path d="M281 76L286 78L282 82Z" fill="#f01010"/><text x="281" y="89" font-size="10" fill="#1a1a9a" font-family="Liberation Sans">+Z</text>
<line x1="305.5" y1="75" x2="305.5" y2="97" stroke="#8a8a8a"/><line x1="306.5" y1="75" x2="306.5" y2="97" stroke="#f6f6f6"/>
<circle cx="318" cy="82" r="5" fill="#fff" stroke="#1a1a9a" stroke-width="1.2"/><path d="M321 86L327 92" stroke="#000" stroke-width="2.5"/><path d="M315.5 82H320.5" stroke="#1a1a9a" stroke-width="1.2"/><path d="M318 79.5V84.5" stroke="#1a1a9a" stroke-width="1.2"/>
<circle cx="343" cy="82" r="5" fill="#fff" stroke="#1a1a9a" stroke-width="1.2"/><path d="M346 86L352 92" stroke="#000" stroke-width="2.5"/><path d="M340.5 82H345.5" stroke="#1a1a9a" stroke-width="1.2"/>
<circle cx="368" cy="82" r="5" fill="#fff" stroke="#1a1a9a"/><rect x="367.5" y="81.5" width="8" height="8" fill="none" stroke="#1a1a9a" stroke-dasharray="1 1"/><path d="M372 86L378 92" stroke="#000" stroke-width="2"/>
<rect x="388.5" y="76.5" width="15" height="15" fill="#fff" stroke="#000"/><rect x="393.5" y="81.5" width="5" height="5" fill="none" stroke="#000"/><path d="M390 78L394 82M402 78L398 82M390 90L394 86M402 90L398 86" stroke="#f01010" stroke-width="1.3"/>
<line x1="412.5" y1="75" x2="412.5" y2="97" stroke="#8a8a8a"/><line x1="413.5" y1="75" x2="413.5" y2="97" stroke="#f6f6f6"/>
<rect x="417" y="74" width="24" height="24" fill="#d0d0d0" stroke="#f0f0f0"/>
<rect x="421.5" y="76.5" width="15" height="15" fill="#fff" stroke="#000"/><path d="M424 90L434 79" stroke="#000" stroke-width="4"/><path d="M424.5 89.5L433.5 79.5" stroke="#f0d020" stroke-width="2.5"/>
<line x1="447.5" y1="75" x2="447.5" y2="97" stroke="#8a8a8a"/><line x1="448.5" y1="75" x2="448.5" y2="97" stroke="#f6f6f6"/>
<rect x="450" y="74" width="24" height="24" fill="#cfcfcf"/>
<path d="M453 88H462M459 85L462 88L459 91" stroke="#f01010" stroke-width="1.8" fill="none"/><path d="M466 77V83M463 80L466 84L469 80" stroke="#f01010" stroke-width="1.8" fill="none"/><rect x="465" y="88" width="2" height="2" fill="#000"/>
<rect x="476.5" y="74.5" width="115" height="22" fill="#fff" stroke="#808080"/><rect x="477" y="75" width="114" height="1" fill="#404040"/>
<rect x="574" y="76" width="16" height="20" fill="#e8e8e8" stroke="#a0a0a0"/>
<path d="M578.5 84.5H585.5L582 88Z" fill="#000"/>
<text x="479" y="91" font-size="12.2" fill="#000" font-family="Liberation Sans">DL PreComp - Pr</text>
<path d="M599 80A6.5 6.5 0 1 1 600 88" fill="none" stroke="#000" stroke-width="2"/><path d="M597 85H606M603 82L606 85L603 88" stroke="#f01010" stroke-width="1.8" fill="none"/>
<line x1="623.5" y1="75" x2="623.5" y2="97" stroke="#8a8a8a"/><line x1="624.5" y1="75" x2="624.5" y2="97" stroke="#f6f6f6"/>
<path d="M632 78H644L640 81V87L643 90H631L635 87V81Z" fill="#c0c0c0" stroke="#000"/>
<text x="656" y="90" font-size="14" font-weight="bold" fill="#20e020" font-family="Liberation Sans">N</text><rect x="654" y="77" width="3" height="3" fill="#20e020"/>
<text x="681" y="87" font-size="11" font-weight="bold" fill="#000" font-family="Liberation Sans">M</text><path d="M680 90H697" stroke="#000" stroke-width="1.5"/><rect x="679" y="89" width="3" height="3"/><rect x="695" y="89" width="3" height="3"/>
<path d="M705.5 84.5H712.5L709 88Z" fill="#000"/>
<path d="M723 90L735 78" stroke="#000"/><circle cx="723.5" cy="89.5" r="2" fill="none" stroke="#000"/><circle cx="734.5" cy="78.5" r="2" fill="none" stroke="#000"/>
<path d="M744.5 84.5H751.5L748 88Z" fill="#000"/>
<rect x="761.5" y="77.5" width="14" height="11" fill="#fff" stroke="#207070"/><text x="764" y="86" font-size="9" font-weight="bold" fill="#f01010" font-family="Liberation Sans">W</text><path d="M761 91H776" stroke="#20c020" stroke-dasharray="1 1"/>
<path d="M784.5 84.5H791.5L788 88Z" fill="#000"/>
<rect x="800.5" y="76.5" width="16" height="15" fill="#1a1a9a"/><path d="M801 91L816 77V91Z" fill="#20e020"/>
<path d="M824.5 84.5H831.5L828 88Z" fill="#000"/>
<rect x="841.5" y="76.5" width="15" height="15" fill="#1a1a9a" stroke="#1a1a9a"/><path d="M842 91L856 79V91Z" fill="#8080d0"/>
<path d="M864.5 84.5H871.5L868 88Z" fill="#000"/>
<circle cx="887.5" cy="83" r="6.5" fill="#fff" stroke="#1aa0b0" stroke-width="1.3"/><text x="884" y="87" font-size="9" fill="#1a1a9a" font-family="Liberation Sans">A</text><path d="M887.5 90V93" stroke="#1aa0b0"/>
<path d="M905 78V91M920 78V91M906 86H919" stroke="#000"/><text x="910" y="83" font-size="8" fill="#2060d0" font-family="Liberation Sans">d</text>
<rect x="930.5" y="76.5" width="15" height="15" fill="#20c020" stroke="#1a1a9a"/><circle cx="936" cy="82" r="4.5" fill="#fff" stroke="#000" stroke-width="1.5"/><path d="M939 85L945 91" stroke="#000" stroke-width="2.2"/>
<rect x="954.5" y="80.5" width="17" height="7" fill="#e0e0f0" stroke="#2030a0"/><path d="M957 84H969" stroke="#2030a0" stroke-dasharray="1 1"/>
<path d="M979.5 84.5H986.5L983 88Z" fill="#000"/>
<rect x="994.5" y="77.5" width="17" height="13" fill="#fff" stroke="#1a1a9a" stroke-width="1.3"/><rect x="999" y="78" width="8" height="12" fill="#8080c0"/>
<path d="M1019.5 84.5H1026.5L1023 88Z" fill="#000"/>
<path d="M1034 80H1052M1034 89H1052" stroke="#f01010" stroke-width="1.5"/><path d="M1038 87L1043 79L1048 87Z" fill="#20d020"/>
<path d="M1059.5 84.5H1066.5L1063 88Z" fill="#000"/>
<path d="M1077 81H1091M1077 87H1091M1080 78V91M1087 78V91" stroke="#a0a0a0" stroke-width="1.5"/>
<path d="M1100 82H1107L1103.5 85Z" fill="#a0a0a0"/>
<rect x="1115" y="76" width="15" height="16" fill="#a0a0a0"/>
<path d="M1139 82H1146L1142.5 85Z" fill="#a0a0a0"/>
<circle cx="1163" cy="84" r="7" fill="none" stroke="#a8a8a8" stroke-width="1.5"/><path d="M1163 79V84H1167" stroke="#a8a8a8" stroke-width="1.3" fill="none"/>
<path d="M1180 82H1187L1183.5 85Z" fill="#a0a0a0"/>
<rect x="46" y="139.5" width="4" height="13" fill="#1a1a9a"/><rect x="50" y="142.5" width="5" height="10" fill="#1a1a9a"/><rect x="49" y="139.5" width="1.5" height="13" fill="#30c0f0"/>
<path d="M68 152.5V138.5H82V152.5H78V143.5H72V152.5Z" fill="#20e020" stroke="#000"/><rect x="76" y="139.5" width="6" height="3" fill="#f01010"/>
<path d="M94 151.5L107 139.5" stroke="#000" stroke-width="1.2"/><rect x="93" y="150.5" width="3" height="3" fill="#20a020" stroke="#000" stroke-width=".5"/><rect x="105" y="138.5" width="3" height="3" fill="#20a020" stroke="#000" stroke-width=".5"/>
<rect x="118.5" y="139.0" width="13" height="13" fill="none" stroke="#000"/><path d="M120 142.5H129M120 148.5H129" stroke="#20d020" stroke-width="1.3"/><g fill="#20a020" stroke="#000" stroke-width=".5"><rect x="117" y="137.5" width="3" height="3"/><rect x="130" y="137.5" width="3" height="3"/><rect x="117" y="150.5" width="3" height="3"/><rect x="130" y="150.5" width="3" height="3"/></g>
<path d="M142 152.5L154 139.5M142 152.5H158" stroke="#000"/><path d="M156 140.5L152 145.5H155V149.5H158V145.5H161Z" fill="#2080f0"/>
<path d="M168.5 139.0H183.5V152.0H168.5V148.0H173.5V143.0H168.5Z" fill="none" stroke="#20e020" stroke-width="1.5"/>
<rect x="192.5" y="139.0" width="15" height="14" fill="#fff" stroke="#000"/><path d="M195 152.5V141.5H207M197 152.5V143.5H207M199 152.5V145.5H207M201 152.5V147.5H207M203 152.5V149.5H207" stroke="#000" fill="none"/>
<rect x="217.5" y="139.0" width="16" height="14" fill="#d8c890" stroke="#000"/><path d="M218 152.5L233 139.5V152.5Z" fill="#c02020"/><path d="M218 152.5L233 139.5" stroke="#000" stroke-width="1.3"/>
<rect x="242.5" y="139.0" width="15" height="14" fill="#fff" stroke="#1a1a9a" stroke-width="1.5"/><path d="M244 151.5L250 143.5H256V151.5Z" fill="#30c030"/>
<rect x="267" y="142.5" width="16" height="5" fill="#f01010"/><path d="M270 143.5V146.5M274 143.5V146.5M278 143.5V146.5" stroke="#fff"/><rect x="266" y="146.5" width="3" height="3" fill="#000"/><rect x="281" y="146.5" width="3" height="3" fill="#000"/>
<path d="M299 138.5V146.5M296 142.5L299 146.5L302 142.5" stroke="#30c0f0" stroke-width="1.5" fill="none"/><rect x="297" y="147.5" width="4" height="4" fill="#000"/>
<circle cx="325" cy="144.5" r="7" fill="#fff" stroke="#1a90c0" stroke-width="1.2"/><text x="321" y="148.5" font-size="10" fill="#1a1a9a" font-family="Liberation Sans">A</text><path d="M326 151.5L333 145.5" stroke="#f0b020" stroke-width="3"/>
<line x1="344.5" y1="136" x2="344.5" y2="158" stroke="#8a8a8a"/><line x1="345.5" y1="136" x2="345.5" y2="158" stroke="#f6f6f6"/>
<path d="M352 145.5H359M356 142.5L359 145.5L356 148.5" stroke="#1a1a9a" stroke-dasharray="1 1" fill="none"/><text x="360" y="149.5" font-size="11" fill="#000" font-family="Liberation Sans">A</text>
<text x="377" y="149.5" font-size="11" fill="#000" font-family="Liberation Sans">A</text><path d="M385 145.5H390M388 143.5L390 145.5L388 147.5" stroke="#f01010" stroke-width="1.3" fill="none"/><text x="390" y="149.5" font-size="11" fill="#000" font-family="Liberation Sans">A</text>
<path d="M408 140.5V150.5M418 140.5V150.5M410 145.5H416M413 142.5L416 145.5L413 148.5" stroke="#000" fill="none"/><path d="M410 145.5H416" stroke="#f01010" stroke-width="1.5"/>
<path d="M431 151.5L445 139.5" stroke="#000" stroke-width="1.2"/><path d="M440 139.5H445V144.5" stroke="#f01010" stroke-width="1.5" fill="none"/>
<path d="M456 152.5L471 138.5M456 138.5L471 152.5" stroke="#000" stroke-width="1.2"/><path d="M460 143.5L466 147.5" stroke="#f01010" stroke-width="1.5"/>
<path d="M478 138.5L490 152.5M490 138.5L478 152.5" stroke="#f01010" stroke-width="2.8"/>
<line x1="510.5" y1="136" x2="510.5" y2="158" stroke="#8a8a8a"/><line x1="511.5" y1="136" x2="511.5" y2="158" stroke="#f6f6f6"/>
<rect x="521.5" y="138.0" width="16" height="16" fill="#fff" stroke="#000"/><path d="M524 151.5L535 140.5" stroke="#000" stroke-width="4"/><path d="M524.5 151.0L534.5 141.0" stroke="#f0d020" stroke-width="2.5"/>
<rect x="546.5" y="138.0" width="16" height="16" fill="#fff" stroke="#000"/><path d="M550.5 137.5V153.5M554.5 137.5V153.5M558.5 137.5V153.5M546 142.0H563M546 146.0H563M546 150.0H563" stroke="#909090"/>
<rect x="571.5" y="138.0" width="16" height="16" fill="#fff" stroke="#000"/><path d="M574 140.5H586M574 143.5H586M574 146.5H586M574 149.5H586M574 152.5H586" stroke="#f01010" stroke-dasharray="1 2"/>
<path d="M7 118V107H18V118M7 111.5H18" stroke="#000" stroke-width="2.2" fill="none"/>
<rect x="6" y="129" width="13" height="12" fill="none" stroke="#f01010" stroke-width="2"/><rect x="9.5" y="132.5" width="6" height="5" fill="none" stroke="#000" stroke-width="1.5"/>
<path d="M9 151H16L19 154V161L16 164H9L6 161V154Z" fill="none" stroke="#f01010" stroke-width="2"/><path d="M10 155H14V160" stroke="#000" stroke-width="1.5" fill="none"/>
<path d="M6 187L19 175" stroke="#f01010" stroke-width="2"/><path d="M7 183H11V179H15" stroke="#000" stroke-width="1.5" fill="none"/>
<line x1="2" y1="197.5" x2="26" y2="197.5" stroke="#8a8a8a"/><line x1="2" y1="198.5" x2="26" y2="198.5" stroke="#f4f4f4"/>
<path d="M7 221V210H18V221M7 214.5H18" stroke="#f4f4f4" stroke-width="2.2" fill="none"/>
<rect x="6" y="229" width="13" height="12" fill="none" stroke="#f01010" stroke-width="2"/><rect x="9.5" y="232.5" width="6" height="5" fill="none" stroke="#f4f4f4" stroke-width="1.5"/>
<path d="M9 252H16L19 255V262L16 265H9L6 262V255Z" fill="none" stroke="#f01010" stroke-width="2"/><path d="M10 256H14V261" stroke="#f4f4f4" stroke-width="1.5" fill="none"/>
<path d="M6 288L19 276" stroke="#f01010" stroke-width="2"/>
<line x1="2" y1="297.5" x2="26" y2="297.5" stroke="#8a8a8a"/><line x1="2" y1="298.5" x2="26" y2="298.5" stroke="#f4f4f4"/>
<path d="M5 305V318M19 305V318" stroke="#000" stroke-width="2"/><path d="M8 309H16M13 307L16 309L13 311M16 314H8M11 312L8 314L11 316" stroke="#f01010" stroke-width="1.5" fill="none"/><path d="M19 305V318" stroke="#f4f4f4" stroke-width="2"/>
<line x1="2" y1="327.5" x2="26" y2="327.5" stroke="#8a8a8a"/><line x1="2" y1="328.5" x2="26" y2="328.5" stroke="#f4f4f4"/>
<path d="M6 349V337H18V349" stroke="#000" stroke-width="2" fill="none"/><path d="M6 342H12" stroke="#f4f4f4" stroke-width="2"/><text x="8" y="349" font-size="12" font-weight="bold" fill="#f01010" font-family="Liberation Sans">?</text>
<line x1="2" y1="358.5" x2="26" y2="358.5" stroke="#8a8a8a"/><line x1="2" y1="359.5" x2="26" y2="359.5" stroke="#f4f4f4"/>
<path d="M6 380V367H18V380" stroke="#000" stroke-width="2" fill="none"/><path d="M6 372H12" stroke="#f4f4f4" stroke-width="2"/><path d="M8 372Q12 368 16 373M7 371L9 375L11 371" stroke="#20c020" stroke-width="1.8" fill="none"/>
<line x1="2" y1="388.5" x2="26" y2="388.5" stroke="#8a8a8a"/><line x1="2" y1="389.5" x2="26" y2="389.5" stroke="#f4f4f4"/>
<rect x="6" y="402" width="10" height="9" fill="#1a1a8a"/><path d="M12 402V398A3.5 3.5 0 0 1 19 398V400" stroke="#1a1a8a" stroke-width="2" fill="none"/><rect x="10" y="405" width="2" height="3" fill="#c0c0c0"/>
<rect x="3.5" y="450.5" width="21" height="58" fill="#fafafa" stroke="#808080"/>
<rect x="3.5" y="520.5" width="21" height="59" fill="#fafafa" stroke="#808080"/>
<rect x="3.5" y="590.5" width="21" height="58" fill="#fafafa" stroke="#808080"/>
<rect x="3.5" y="790.5" width="21" height="63" fill="#fafafa" stroke="#808080"/>
<text transform="translate(18.5,507) rotate(-90)" font-size="12.5" fill="#1a1a7a" font-family="Liberation Sans">Detail</text>
<rect x="7.5" y="453.5" width="12" height="11" fill="#fff" stroke="#1a1a9a"/><path d="M9 462L12 456L15 460L18 455" stroke="#20a020" stroke-width="1.3" fill="none"/><path d="M10 457V463M16 456V462" stroke="#f0a020"/>
<text transform="translate(18.5,575) rotate(-90)" font-size="12.5" fill="#1a1a7a" font-family="Liberation Sans">Exclude</text>
<text transform="translate(18.5,646) rotate(-90)" font-size="12.5" fill="#1a1a7a" font-family="Liberation Sans">Design</text>
<rect x="7.5" y="593.5" width="12" height="11" fill="#fff" stroke="#1a1a9a"/><path d="M10 596H17M13.5 596V603M10 603H17" stroke="#000" stroke-width="1.3"/>
<text transform="translate(18.5,851) rotate(-90)" font-size="12.5" fill="#000" font-family="Liberation Sans">Elevation</text>
<path d="M20 792A5 5 0 1 0 20 802" stroke="#40a0e0" fill="none"/><path d="M14 804V850" stroke="#40a0e0" stroke-dasharray="2 2"/>
<path d="M1357.5 577.5V594.5L1361.5 590.5L1364.5 597.5L1366.5 596.5L1363.5 589.5H1369.5Z" fill="#fff" stroke="#000"/></svg>
<div class="a" style="left:1770px;top:93px;width:136px;height:321px;background:#fdfdfb;box-shadow:1px 1px 3px rgba(0,0,0,.25)"></div>
<div class="t" style="left:1777px;top:103px;font-size:11.4px;color:#8a8a8a">Data Entry</div>
<div class="a" style="left:1886px;top:100px;width:19px;height:19px;background:#e6e6e6"></div>
<svg class="ico" style="left:1890px;top:104px" width="11" height="11" viewBox="0 0 11 11"><path d="M3 3L8 8M8 3L3 8" stroke="#fafafa" stroke-width="1"/></svg>
<div class="a" style="left:1770px;top:123px;width:136px;height:290px;background:#5e5e5e"></div>
<div class="pbtn" style="left:1771px;top:124px;width:135px">Project Grid</div>
<div class="pbtn" style="left:1771px;top:140px;width:135px">Materials</div>
<div class="pbtn" style="left:1771px;top:156px;width:135px">Deck Definitions</div>
<div class="pbtn" style="left:1771px;top:172px;width:135px">Member Design Rules</div>
<div class="pbtn" style="left:1771px;top:188px;width:135px">Wall Design Rules</div>
<div class="pbtn" style="left:1771px;top:204px;width:135px">Connection Rules</div>
<div class="pbtn" style="left:1771px;top:220px;width:135px">Area Load Definitions</div>
<div class="pbtn" style="left:1771px;top:236px;width:135px">Point Locations</div>
<div class="pbtn" style="left:1771px;top:252px;width:135px">Columns</div>
<div class="pbtn" style="left:1771px;top:268px;width:135px">Column Stacks</div>
<div class="pbtn" style="left:1771px;top:284px;width:135px">Wall Panels</div>
<div class="pbtn" style="left:1771px;top:300px;width:135px">Beams</div>
<div class="pbtn" style="left:1771px;top:316px;width:135px">Diaphragms</div>
<div class="pbtn" style="left:1771px;top:332px;width:135px">Point Loads</div>
<div class="pbtn" style="left:1771px;top:348px;width:135px">Line Loads</div>
<div class="pbtn" style="left:1771px;top:364px;width:135px">Tapered Area Loads</div>
<div class="pbtn" style="left:1771px;top:380px;width:135px">Load Combinations</div>
<div class="pbtn" style="left:1771px;top:396px;width:135px">Floors</div>
<div class="a" style="left:1772px;top:413px;width:134px;height:15px;background:rgba(0,0,0,0.08)"></div>
<div class="a" style="left:1771px;top:428px;width:136px;height:273px;background:#fdfdfb;box-shadow:1px 1px 3px rgba(0,0,0,.25)"></div>
<div class="t" style="left:1778px;top:438px;font-size:11.4px;color:#8a8a8a">Results</div>
<div class="a" style="left:1887px;top:435px;width:19px;height:19px;background:#e6e6e6"></div>
<svg class="ico" style="left:1891px;top:439px" width="11" height="11" viewBox="0 0 11 11"><path d="M3 3L8 8M8 3L3 8" stroke="#fafafa" stroke-width="1"/></svg>
<div class="a" style="left:1771px;top:458px;width:136px;height:242px;background:#5e5e5e"></div>
<div class="pbtn" style="left:1772px;top:459px;width:135px">Design Results</div>
<div class="pbtn" style="left:1772px;top:475px;width:135px">Code Checks</div>
<div class="pbtn" style="left:1772px;top:491px;width:135px">Shear Results</div>
<div class="pbtn" style="left:1772px;top:507px;width:135px">Bending Results</div>
<div class="pbtn" style="left:1772px;top:523px;width:135px">Deflection Results</div>
<div class="pbtn" style="left:1772px;top:539px;width:135px">Vibrations</div>
<div class="pbtn" style="left:1772px;top:555px;width:135px">End Reactions</div>
<div class="pbtn" style="left:1772px;top:571px;width:135px">Column Forces</div>
<div class="pbtn" style="left:1772px;top:587px;width:135px">Column Results</div>
<div class="pbtn" style="left:1772px;top:603px;width:135px">Member/Wall Rebar</div>
<div class="pbtn" style="left:1772px;top:619px;width:135px">Wall Forces</div>
<div class="pbtn" style="left:1772px;top:635px;width:135px">Wall Results</div>
<div class="pbtn" style="left:1772px;top:651px;width:135px">Material TakeOff</div>
<div class="pbtn" style="left:1772px;top:667px;width:135px">Connection Results</div>
<div class="pbtn" style="left:1772px;top:683px;width:135px">Warning Log</div>
</body></html>
